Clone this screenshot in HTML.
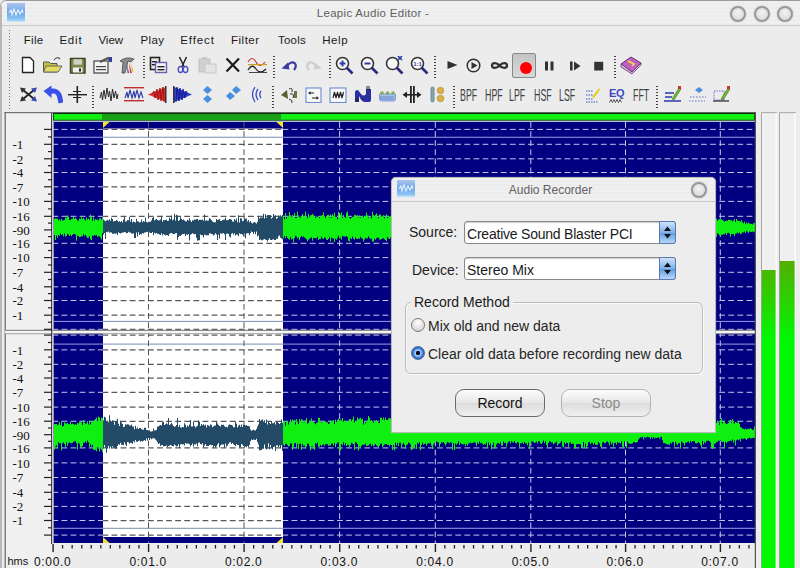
<!DOCTYPE html>
<html><head><meta charset="utf-8"><style>
html,body{margin:0;padding:0;}
body{width:800px;height:568px;overflow:hidden;position:relative;background:#ececec;font-family:"Liberation Sans",sans-serif;}
.abs{position:absolute;}
</style></head><body>
<div class="abs" style="left:0;top:0;width:800px;height:26px;background:repeating-linear-gradient(#f0f0f0 0,#f0f0f0 2px,#ededed 2px,#ededed 4px);border-top:1px solid #9a9a9a;border-left:1px solid #a8a8a8;border-top-left-radius:6px;box-sizing:border-box;border-bottom:1px solid #cbcbcb"></div>
<div class="abs" style="left:0;top:6px;width:1.5px;height:562px;background:#b8b8b8"></div>
<svg style="position:absolute;left:0;top:0" width="800" height="568" viewBox="0 0 800 568"><rect x="5" y="112" width="48" height="456" fill="#f0f0f0"/><rect x="4.5" y="112" width="1.5" height="456" fill="#808080"/><rect x="4.5" y="112" width="751" height="1.2" fill="#707070"/><rect x="53" y="112.8" width="702" height="8" fill="#0a300a"/><rect x="53.8" y="114" width="700.4" height="5.8" fill="#12ee12"/><rect x="102" y="114" width="179" height="5.8" fill="#179f17"/><rect x="53" y="120.8" width="702" height="1.2" fill="#a8c8c8"/><rect x="53" y="122" width="702" height="421" fill="#020080"/><rect x="53" y="122" width="1" height="421" fill="#9090b8"/><rect x="103" y="128.5" width="180" height="408.5" fill="#ffffff"/><line x1="53" y1="129.40" x2="103" y2="129.40" stroke="#c4c4ec" stroke-width="1" stroke-dasharray="5.8 3.3" stroke-dashoffset="-8.5"/><line x1="103" y1="129.40" x2="283" y2="129.40" stroke="#585858" stroke-width="1.25" stroke-dasharray="5.8 3.3" stroke-dashoffset="-8.5"/><line x1="283" y1="129.40" x2="755" y2="129.40" stroke="#c4c4ec" stroke-width="1" stroke-dasharray="5.8 3.3" stroke-dashoffset="-8.5"/><line x1="53" y1="144.30" x2="103" y2="144.30" stroke="#c4c4ec" stroke-width="1" stroke-dasharray="5.8 3.3" stroke-dashoffset="-8.5"/><line x1="103" y1="144.30" x2="283" y2="144.30" stroke="#585858" stroke-width="1.25" stroke-dasharray="5.8 3.3" stroke-dashoffset="-8.5"/><line x1="283" y1="144.30" x2="755" y2="144.30" stroke="#c4c4ec" stroke-width="1" stroke-dasharray="5.8 3.3" stroke-dashoffset="-8.5"/><line x1="53" y1="158.80" x2="103" y2="158.80" stroke="#c4c4ec" stroke-width="1" stroke-dasharray="5.8 3.3" stroke-dashoffset="-8.5"/><line x1="103" y1="158.80" x2="283" y2="158.80" stroke="#585858" stroke-width="1.25" stroke-dasharray="5.8 3.3" stroke-dashoffset="-8.5"/><line x1="283" y1="158.80" x2="755" y2="158.80" stroke="#c4c4ec" stroke-width="1" stroke-dasharray="5.8 3.3" stroke-dashoffset="-8.5"/><line x1="53" y1="172.50" x2="103" y2="172.50" stroke="#c4c4ec" stroke-width="1" stroke-dasharray="5.8 3.3" stroke-dashoffset="-8.5"/><line x1="103" y1="172.50" x2="283" y2="172.50" stroke="#585858" stroke-width="1.25" stroke-dasharray="5.8 3.3" stroke-dashoffset="-8.5"/><line x1="283" y1="172.50" x2="755" y2="172.50" stroke="#c4c4ec" stroke-width="1" stroke-dasharray="5.8 3.3" stroke-dashoffset="-8.5"/><line x1="53" y1="186.80" x2="103" y2="186.80" stroke="#c4c4ec" stroke-width="1" stroke-dasharray="5.8 3.3" stroke-dashoffset="-8.5"/><line x1="103" y1="186.80" x2="283" y2="186.80" stroke="#585858" stroke-width="1.25" stroke-dasharray="5.8 3.3" stroke-dashoffset="-8.5"/><line x1="283" y1="186.80" x2="755" y2="186.80" stroke="#c4c4ec" stroke-width="1" stroke-dasharray="5.8 3.3" stroke-dashoffset="-8.5"/><line x1="53" y1="201.40" x2="103" y2="201.40" stroke="#c4c4ec" stroke-width="1" stroke-dasharray="5.8 3.3" stroke-dashoffset="-8.5"/><line x1="103" y1="201.40" x2="283" y2="201.40" stroke="#585858" stroke-width="1.25" stroke-dasharray="5.8 3.3" stroke-dashoffset="-8.5"/><line x1="283" y1="201.40" x2="755" y2="201.40" stroke="#c4c4ec" stroke-width="1" stroke-dasharray="5.8 3.3" stroke-dashoffset="-8.5"/><line x1="53" y1="216.30" x2="103" y2="216.30" stroke="#c4c4ec" stroke-width="1" stroke-dasharray="5.8 3.3" stroke-dashoffset="-8.5"/><line x1="103" y1="216.30" x2="283" y2="216.30" stroke="#585858" stroke-width="1.25" stroke-dasharray="5.8 3.3" stroke-dashoffset="-8.5"/><line x1="283" y1="216.30" x2="755" y2="216.30" stroke="#c4c4ec" stroke-width="1" stroke-dasharray="5.8 3.3" stroke-dashoffset="-8.5"/><line x1="53" y1="229.90" x2="103" y2="229.90" stroke="#c4c4ec" stroke-width="1" stroke-dasharray="5.8 3.3" stroke-dashoffset="-8.5"/><line x1="103" y1="229.90" x2="283" y2="229.90" stroke="#585858" stroke-width="1.25" stroke-dasharray="5.8 3.3" stroke-dashoffset="-8.5"/><line x1="283" y1="229.90" x2="755" y2="229.90" stroke="#c4c4ec" stroke-width="1" stroke-dasharray="5.8 3.3" stroke-dashoffset="-8.5"/><line x1="53" y1="243.30" x2="103" y2="243.30" stroke="#c4c4ec" stroke-width="1" stroke-dasharray="5.8 3.3" stroke-dashoffset="-8.5"/><line x1="103" y1="243.30" x2="283" y2="243.30" stroke="#585858" stroke-width="1.25" stroke-dasharray="5.8 3.3" stroke-dashoffset="-8.5"/><line x1="283" y1="243.30" x2="755" y2="243.30" stroke="#c4c4ec" stroke-width="1" stroke-dasharray="5.8 3.3" stroke-dashoffset="-8.5"/><line x1="53" y1="257.60" x2="103" y2="257.60" stroke="#c4c4ec" stroke-width="1" stroke-dasharray="5.8 3.3" stroke-dashoffset="-8.5"/><line x1="103" y1="257.60" x2="283" y2="257.60" stroke="#585858" stroke-width="1.25" stroke-dasharray="5.8 3.3" stroke-dashoffset="-8.5"/><line x1="283" y1="257.60" x2="755" y2="257.60" stroke="#c4c4ec" stroke-width="1" stroke-dasharray="5.8 3.3" stroke-dashoffset="-8.5"/><line x1="53" y1="272.30" x2="103" y2="272.30" stroke="#c4c4ec" stroke-width="1" stroke-dasharray="5.8 3.3" stroke-dashoffset="-8.5"/><line x1="103" y1="272.30" x2="283" y2="272.30" stroke="#585858" stroke-width="1.25" stroke-dasharray="5.8 3.3" stroke-dashoffset="-8.5"/><line x1="283" y1="272.30" x2="755" y2="272.30" stroke="#c4c4ec" stroke-width="1" stroke-dasharray="5.8 3.3" stroke-dashoffset="-8.5"/><line x1="53" y1="286.80" x2="103" y2="286.80" stroke="#c4c4ec" stroke-width="1" stroke-dasharray="5.8 3.3" stroke-dashoffset="-8.5"/><line x1="103" y1="286.80" x2="283" y2="286.80" stroke="#585858" stroke-width="1.25" stroke-dasharray="5.8 3.3" stroke-dashoffset="-8.5"/><line x1="283" y1="286.80" x2="755" y2="286.80" stroke="#c4c4ec" stroke-width="1" stroke-dasharray="5.8 3.3" stroke-dashoffset="-8.5"/><line x1="53" y1="300.50" x2="103" y2="300.50" stroke="#c4c4ec" stroke-width="1" stroke-dasharray="5.8 3.3" stroke-dashoffset="-8.5"/><line x1="103" y1="300.50" x2="283" y2="300.50" stroke="#585858" stroke-width="1.25" stroke-dasharray="5.8 3.3" stroke-dashoffset="-8.5"/><line x1="283" y1="300.50" x2="755" y2="300.50" stroke="#c4c4ec" stroke-width="1" stroke-dasharray="5.8 3.3" stroke-dashoffset="-8.5"/><line x1="53" y1="315.20" x2="103" y2="315.20" stroke="#c4c4ec" stroke-width="1" stroke-dasharray="5.8 3.3" stroke-dashoffset="-8.5"/><line x1="103" y1="315.20" x2="283" y2="315.20" stroke="#585858" stroke-width="1.25" stroke-dasharray="5.8 3.3" stroke-dashoffset="-8.5"/><line x1="283" y1="315.20" x2="755" y2="315.20" stroke="#c4c4ec" stroke-width="1" stroke-dasharray="5.8 3.3" stroke-dashoffset="-8.5"/><line x1="53" y1="329.30" x2="103" y2="329.30" stroke="#c4c4ec" stroke-width="1" stroke-dasharray="5.8 3.3" stroke-dashoffset="-8.5"/><line x1="103" y1="329.30" x2="283" y2="329.30" stroke="#585858" stroke-width="1.25" stroke-dasharray="5.8 3.3" stroke-dashoffset="-8.5"/><line x1="283" y1="329.30" x2="755" y2="329.30" stroke="#c4c4ec" stroke-width="1" stroke-dasharray="5.8 3.3" stroke-dashoffset="-8.5"/><line x1="53" y1="335.10" x2="103" y2="335.10" stroke="#c4c4ec" stroke-width="1" stroke-dasharray="5.8 3.3" stroke-dashoffset="-8.5"/><line x1="103" y1="335.10" x2="283" y2="335.10" stroke="#585858" stroke-width="1.25" stroke-dasharray="5.8 3.3" stroke-dashoffset="-8.5"/><line x1="283" y1="335.10" x2="755" y2="335.10" stroke="#c4c4ec" stroke-width="1" stroke-dasharray="5.8 3.3" stroke-dashoffset="-8.5"/><line x1="53" y1="349.85" x2="103" y2="349.85" stroke="#c4c4ec" stroke-width="1" stroke-dasharray="5.8 3.3" stroke-dashoffset="-8.5"/><line x1="103" y1="349.85" x2="283" y2="349.85" stroke="#585858" stroke-width="1.25" stroke-dasharray="5.8 3.3" stroke-dashoffset="-8.5"/><line x1="283" y1="349.85" x2="755" y2="349.85" stroke="#c4c4ec" stroke-width="1" stroke-dasharray="5.8 3.3" stroke-dashoffset="-8.5"/><line x1="53" y1="364.30" x2="103" y2="364.30" stroke="#c4c4ec" stroke-width="1" stroke-dasharray="5.8 3.3" stroke-dashoffset="-8.5"/><line x1="103" y1="364.30" x2="283" y2="364.30" stroke="#585858" stroke-width="1.25" stroke-dasharray="5.8 3.3" stroke-dashoffset="-8.5"/><line x1="283" y1="364.30" x2="755" y2="364.30" stroke="#c4c4ec" stroke-width="1" stroke-dasharray="5.8 3.3" stroke-dashoffset="-8.5"/><line x1="53" y1="378.00" x2="103" y2="378.00" stroke="#c4c4ec" stroke-width="1" stroke-dasharray="5.8 3.3" stroke-dashoffset="-8.5"/><line x1="103" y1="378.00" x2="283" y2="378.00" stroke="#585858" stroke-width="1.25" stroke-dasharray="5.8 3.3" stroke-dashoffset="-8.5"/><line x1="283" y1="378.00" x2="755" y2="378.00" stroke="#c4c4ec" stroke-width="1" stroke-dasharray="5.8 3.3" stroke-dashoffset="-8.5"/><line x1="53" y1="392.30" x2="103" y2="392.30" stroke="#c4c4ec" stroke-width="1" stroke-dasharray="5.8 3.3" stroke-dashoffset="-8.5"/><line x1="103" y1="392.30" x2="283" y2="392.30" stroke="#585858" stroke-width="1.25" stroke-dasharray="5.8 3.3" stroke-dashoffset="-8.5"/><line x1="283" y1="392.30" x2="755" y2="392.30" stroke="#c4c4ec" stroke-width="1" stroke-dasharray="5.8 3.3" stroke-dashoffset="-8.5"/><line x1="53" y1="407.10" x2="103" y2="407.10" stroke="#c4c4ec" stroke-width="1" stroke-dasharray="5.8 3.3" stroke-dashoffset="-8.5"/><line x1="103" y1="407.10" x2="283" y2="407.10" stroke="#585858" stroke-width="1.25" stroke-dasharray="5.8 3.3" stroke-dashoffset="-8.5"/><line x1="283" y1="407.10" x2="755" y2="407.10" stroke="#c4c4ec" stroke-width="1" stroke-dasharray="5.8 3.3" stroke-dashoffset="-8.5"/><line x1="53" y1="421.25" x2="103" y2="421.25" stroke="#c4c4ec" stroke-width="1" stroke-dasharray="5.8 3.3" stroke-dashoffset="-8.5"/><line x1="103" y1="421.25" x2="283" y2="421.25" stroke="#585858" stroke-width="1.25" stroke-dasharray="5.8 3.3" stroke-dashoffset="-8.5"/><line x1="283" y1="421.25" x2="755" y2="421.25" stroke="#c4c4ec" stroke-width="1" stroke-dasharray="5.8 3.3" stroke-dashoffset="-8.5"/><line x1="53" y1="434.70" x2="103" y2="434.70" stroke="#c4c4ec" stroke-width="1" stroke-dasharray="5.8 3.3" stroke-dashoffset="-8.5"/><line x1="103" y1="434.70" x2="283" y2="434.70" stroke="#585858" stroke-width="1.25" stroke-dasharray="5.8 3.3" stroke-dashoffset="-8.5"/><line x1="283" y1="434.70" x2="755" y2="434.70" stroke="#c4c4ec" stroke-width="1" stroke-dasharray="5.8 3.3" stroke-dashoffset="-8.5"/><line x1="53" y1="447.90" x2="103" y2="447.90" stroke="#c4c4ec" stroke-width="1" stroke-dasharray="5.8 3.3" stroke-dashoffset="-8.5"/><line x1="103" y1="447.90" x2="283" y2="447.90" stroke="#585858" stroke-width="1.25" stroke-dasharray="5.8 3.3" stroke-dashoffset="-8.5"/><line x1="283" y1="447.90" x2="755" y2="447.90" stroke="#c4c4ec" stroke-width="1" stroke-dasharray="5.8 3.3" stroke-dashoffset="-8.5"/><line x1="53" y1="462.90" x2="103" y2="462.90" stroke="#c4c4ec" stroke-width="1" stroke-dasharray="5.8 3.3" stroke-dashoffset="-8.5"/><line x1="103" y1="462.90" x2="283" y2="462.90" stroke="#585858" stroke-width="1.25" stroke-dasharray="5.8 3.3" stroke-dashoffset="-8.5"/><line x1="283" y1="462.90" x2="755" y2="462.90" stroke="#c4c4ec" stroke-width="1" stroke-dasharray="5.8 3.3" stroke-dashoffset="-8.5"/><line x1="53" y1="477.50" x2="103" y2="477.50" stroke="#c4c4ec" stroke-width="1" stroke-dasharray="5.8 3.3" stroke-dashoffset="-8.5"/><line x1="103" y1="477.50" x2="283" y2="477.50" stroke="#585858" stroke-width="1.25" stroke-dasharray="5.8 3.3" stroke-dashoffset="-8.5"/><line x1="283" y1="477.50" x2="755" y2="477.50" stroke="#c4c4ec" stroke-width="1" stroke-dasharray="5.8 3.3" stroke-dashoffset="-8.5"/><line x1="53" y1="492.30" x2="103" y2="492.30" stroke="#c4c4ec" stroke-width="1" stroke-dasharray="5.8 3.3" stroke-dashoffset="-8.5"/><line x1="103" y1="492.30" x2="283" y2="492.30" stroke="#585858" stroke-width="1.25" stroke-dasharray="5.8 3.3" stroke-dashoffset="-8.5"/><line x1="283" y1="492.30" x2="755" y2="492.30" stroke="#c4c4ec" stroke-width="1" stroke-dasharray="5.8 3.3" stroke-dashoffset="-8.5"/><line x1="53" y1="506.40" x2="103" y2="506.40" stroke="#c4c4ec" stroke-width="1" stroke-dasharray="5.8 3.3" stroke-dashoffset="-8.5"/><line x1="103" y1="506.40" x2="283" y2="506.40" stroke="#585858" stroke-width="1.25" stroke-dasharray="5.8 3.3" stroke-dashoffset="-8.5"/><line x1="283" y1="506.40" x2="755" y2="506.40" stroke="#c4c4ec" stroke-width="1" stroke-dasharray="5.8 3.3" stroke-dashoffset="-8.5"/><line x1="53" y1="520.50" x2="103" y2="520.50" stroke="#c4c4ec" stroke-width="1" stroke-dasharray="5.8 3.3" stroke-dashoffset="-8.5"/><line x1="103" y1="520.50" x2="283" y2="520.50" stroke="#585858" stroke-width="1.25" stroke-dasharray="5.8 3.3" stroke-dashoffset="-8.5"/><line x1="283" y1="520.50" x2="755" y2="520.50" stroke="#c4c4ec" stroke-width="1" stroke-dasharray="5.8 3.3" stroke-dashoffset="-8.5"/><line x1="53" y1="535.10" x2="103" y2="535.10" stroke="#c4c4ec" stroke-width="1" stroke-dasharray="5.8 3.3" stroke-dashoffset="-8.5"/><line x1="103" y1="535.10" x2="283" y2="535.10" stroke="#585858" stroke-width="1.25" stroke-dasharray="5.8 3.3" stroke-dashoffset="-8.5"/><line x1="283" y1="535.10" x2="755" y2="535.10" stroke="#c4c4ec" stroke-width="1" stroke-dasharray="5.8 3.3" stroke-dashoffset="-8.5"/><line x1="53" y1="137.25" x2="103" y2="137.25" stroke="#9c9ce4" stroke-width="1"/><line x1="103" y1="137.25" x2="283" y2="137.25" stroke="#7890b0" stroke-width="1"/><line x1="283" y1="137.25" x2="755" y2="137.25" stroke="#9c9ce4" stroke-width="1"/><line x1="53" y1="321.40" x2="103" y2="321.40" stroke="#9c9ce4" stroke-width="1"/><line x1="103" y1="321.40" x2="283" y2="321.40" stroke="#7890b0" stroke-width="1"/><line x1="283" y1="321.40" x2="755" y2="321.40" stroke="#9c9ce4" stroke-width="1"/><line x1="53" y1="344.10" x2="103" y2="344.10" stroke="#9c9ce4" stroke-width="1"/><line x1="103" y1="344.10" x2="283" y2="344.10" stroke="#7890b0" stroke-width="1"/><line x1="283" y1="344.10" x2="755" y2="344.10" stroke="#9c9ce4" stroke-width="1"/><line x1="53" y1="528.30" x2="103" y2="528.30" stroke="#9c9ce4" stroke-width="1"/><line x1="103" y1="528.30" x2="283" y2="528.30" stroke="#7890b0" stroke-width="1"/><line x1="283" y1="528.30" x2="755" y2="528.30" stroke="#9c9ce4" stroke-width="1"/><line x1="148.5" y1="122" x2="148.5" y2="543" stroke="#555555" stroke-width="1" stroke-dasharray="5.8 3.3"/><line x1="244.0" y1="122" x2="244.0" y2="543" stroke="#555555" stroke-width="1" stroke-dasharray="5.8 3.3"/><line x1="339.6" y1="122" x2="339.6" y2="543" stroke="#c4c4ec" stroke-width="1" stroke-dasharray="5.8 3.3"/><line x1="435.3" y1="122" x2="435.3" y2="543" stroke="#c4c4ec" stroke-width="1" stroke-dasharray="5.8 3.3"/><line x1="530.8" y1="122" x2="530.8" y2="543" stroke="#c4c4ec" stroke-width="1" stroke-dasharray="5.8 3.3"/><line x1="625.5" y1="122" x2="625.5" y2="543" stroke="#c4c4ec" stroke-width="1" stroke-dasharray="5.8 3.3"/><line x1="720.3" y1="122" x2="720.3" y2="543" stroke="#c4c4ec" stroke-width="1" stroke-dasharray="5.8 3.3"/><path d="M54.0,219.0 L55.0,219.0 L55.0,218.2 L56.0,218.2 L56.0,218.8 L57.0,218.8 L57.0,218.6 L58.0,218.6 L58.0,220.3 L59.0,220.3 L59.0,219.2 L60.0,219.2 L60.0,220.9 L61.0,220.9 L61.0,218.7 L62.0,218.7 L62.0,220.2 L63.0,220.2 L63.0,220.6 L64.0,220.6 L64.0,220.0 L65.0,220.0 L65.0,217.6 L66.0,217.6 L66.0,217.7 L67.0,217.7 L67.0,215.2 L68.0,215.2 L68.0,216.4 L69.0,216.4 L69.0,220.1 L70.0,220.1 L70.0,220.1 L71.0,220.1 L71.0,219.1 L72.0,219.1 L72.0,218.8 L73.0,218.8 L73.0,216.7 L74.0,216.7 L74.0,218.4 L75.0,218.4 L75.0,217.9 L76.0,217.9 L76.0,219.1 L77.0,219.1 L77.0,220.6 L78.0,220.6 L78.0,220.8 L79.0,220.8 L79.0,218.7 L80.0,218.7 L80.0,219.3 L81.0,219.3 L81.0,216.1 L82.0,216.1 L82.0,219.1 L83.0,219.1 L83.0,217.9 L84.0,217.9 L84.0,219.3 L85.0,219.3 L85.0,220.4 L86.0,220.4 L86.0,217.5 L87.0,217.5 L87.0,219.6 L88.0,219.6 L88.0,218.4 L89.0,218.4 L89.0,219.7 L90.0,219.7 L90.0,214.5 L91.0,214.5 L91.0,217.3 L92.0,217.3 L92.0,220.9 L93.0,220.9 L93.0,217.2 L94.0,217.2 L94.0,220.5 L95.0,220.5 L95.0,219.1 L96.0,219.1 L96.0,219.8 L97.0,219.8 L97.0,219.5 L98.0,219.5 L98.0,220.5 L99.0,220.5 L99.0,218.5 L100.0,218.5 L100.0,218.2 L101.0,218.2 L101.0,219.7 L102.0,219.7 L102.0,217.8 L103.0,217.8 L103.0,233.2 L102.0,233.2 L102.0,239.6 L101.0,239.6 L101.0,237.6 L100.0,237.6 L100.0,236.4 L99.0,236.4 L99.0,236.3 L98.0,236.3 L98.0,236.7 L97.0,236.7 L97.0,235.1 L96.0,235.1 L96.0,235.4 L95.0,235.4 L95.0,235.1 L94.0,235.1 L94.0,235.9 L93.0,235.9 L93.0,235.4 L92.0,235.4 L92.0,240.2 L91.0,240.2 L91.0,239.3 L90.0,239.3 L90.0,236.1 L89.0,236.1 L89.0,237.7 L88.0,237.7 L88.0,237.9 L87.0,237.9 L87.0,236.4 L86.0,236.4 L86.0,234.7 L85.0,234.7 L85.0,235.7 L84.0,235.7 L84.0,234.1 L83.0,234.1 L83.0,236.6 L82.0,236.6 L82.0,236.1 L81.0,236.1 L81.0,237.1 L80.0,237.1 L80.0,237.2 L79.0,237.2 L79.0,236.1 L78.0,236.1 L78.0,235.8 L77.0,235.8 L77.0,240.8 L76.0,240.8 L76.0,234.5 L75.0,234.5 L75.0,234.0 L74.0,234.0 L74.0,233.9 L73.0,233.9 L73.0,234.8 L72.0,234.8 L72.0,236.3 L71.0,236.3 L71.0,234.7 L70.0,234.7 L70.0,236.0 L69.0,236.0 L69.0,234.4 L68.0,234.4 L68.0,234.0 L67.0,234.0 L67.0,236.1 L66.0,236.1 L66.0,236.6 L65.0,236.6 L65.0,233.5 L64.0,233.5 L64.0,236.5 L63.0,236.5 L63.0,234.2 L62.0,234.2 L62.0,235.1 L61.0,235.1 L61.0,233.4 L60.0,233.4 L60.0,235.7 L59.0,235.7 L59.0,235.1 L58.0,235.1 L58.0,237.7 L57.0,237.7 L57.0,235.6 L56.0,235.6 L56.0,240.1 L55.0,240.1 L55.0,235.1 L54.0,235.1Z" fill="#10f010"/><path d="M103.0,219.6 L104.0,219.6 L104.0,220.6 L105.0,220.6 L105.0,221.3 L106.0,221.3 L106.0,220.5 L107.0,220.5 L107.0,219.7 L108.0,219.7 L108.0,220.4 L109.0,220.4 L109.0,219.3 L110.0,219.3 L110.0,220.7 L111.0,220.7 L111.0,217.8 L112.0,217.8 L112.0,218.9 L113.0,218.9 L113.0,221.5 L114.0,221.5 L114.0,221.1 L115.0,221.1 L115.0,220.9 L116.0,220.9 L116.0,220.1 L117.0,220.1 L117.0,220.8 L118.0,220.8 L118.0,221.8 L119.0,221.8 L119.0,221.3 L120.0,221.3 L120.0,222.0 L121.0,222.0 L121.0,221.1 L122.0,221.1 L122.0,222.4 L123.0,222.4 L123.0,219.5 L124.0,219.5 L124.0,217.1 L125.0,217.1 L125.0,221.4 L126.0,221.4 L126.0,221.6 L127.0,221.6 L127.0,220.1 L128.0,220.1 L128.0,220.3 L129.0,220.3 L129.0,217.0 L130.0,217.0 L130.0,221.6 L131.0,221.6 L131.0,218.9 L132.0,218.9 L132.0,222.6 L133.0,222.6 L133.0,221.4 L134.0,221.4 L134.0,222.1 L135.0,222.1 L135.0,222.4 L136.0,222.4 L136.0,218.8 L137.0,218.8 L137.0,221.3 L138.0,221.3 L138.0,221.6 L139.0,221.6 L139.0,222.5 L140.0,222.5 L140.0,221.9 L141.0,221.9 L141.0,219.6 L142.0,219.6 L142.0,222.3 L143.0,222.3 L143.0,221.0 L144.0,221.0 L144.0,221.8 L145.0,221.8 L145.0,217.5 L146.0,217.5 L146.0,222.1 L147.0,222.1 L147.0,222.5 L148.0,222.5 L148.0,221.7 L149.0,221.7 L149.0,221.9 L150.0,221.9 L150.0,221.8 L151.0,221.8 L151.0,220.5 L152.0,220.5 L152.0,218.1 L153.0,218.1 L153.0,217.0 L154.0,217.0 L154.0,220.5 L155.0,220.5 L155.0,219.6 L156.0,219.6 L156.0,218.9 L157.0,218.9 L157.0,219.9 L158.0,219.9 L158.0,220.4 L159.0,220.4 L159.0,220.3 L160.0,220.3 L160.0,219.5 L161.0,219.5 L161.0,215.7 L162.0,215.7 L162.0,221.7 L163.0,221.7 L163.0,219.9 L164.0,219.9 L164.0,220.2 L165.0,220.2 L165.0,220.0 L166.0,220.0 L166.0,219.6 L167.0,219.6 L167.0,221.0 L168.0,221.0 L168.0,220.8 L169.0,220.8 L169.0,217.7 L170.0,217.7 L170.0,219.1 L171.0,219.1 L171.0,215.6 L172.0,215.6 L172.0,220.3 L173.0,220.3 L173.0,219.5 L174.0,219.5 L174.0,213.8 L175.0,213.8 L175.0,220.6 L176.0,220.6 L176.0,214.8 L177.0,214.8 L177.0,215.6 L178.0,215.6 L178.0,220.9 L179.0,220.9 L179.0,219.9 L180.0,219.9 L180.0,217.3 L181.0,217.3 L181.0,218.8 L182.0,218.8 L182.0,220.0 L183.0,220.0 L183.0,219.5 L184.0,219.5 L184.0,220.5 L185.0,220.5 L185.0,221.2 L186.0,221.2 L186.0,221.4 L187.0,221.4 L187.0,219.7 L188.0,219.7 L188.0,220.4 L189.0,220.4 L189.0,218.2 L190.0,218.2 L190.0,220.4 L191.0,220.4 L191.0,221.9 L192.0,221.9 L192.0,220.2 L193.0,220.2 L193.0,220.6 L194.0,220.6 L194.0,219.6 L195.0,219.6 L195.0,219.8 L196.0,219.8 L196.0,218.9 L197.0,218.9 L197.0,218.9 L198.0,218.9 L198.0,220.4 L199.0,220.4 L199.0,219.7 L200.0,219.7 L200.0,219.7 L201.0,219.7 L201.0,219.9 L202.0,219.9 L202.0,219.5 L203.0,219.5 L203.0,220.8 L204.0,220.8 L204.0,214.4 L205.0,214.4 L205.0,220.8 L206.0,220.8 L206.0,220.2 L207.0,220.2 L207.0,220.7 L208.0,220.7 L208.0,220.5 L209.0,220.5 L209.0,218.1 L210.0,218.1 L210.0,219.0 L211.0,219.0 L211.0,220.2 L212.0,220.2 L212.0,221.6 L213.0,221.6 L213.0,222.2 L214.0,222.2 L214.0,222.3 L215.0,222.3 L215.0,222.3 L216.0,222.3 L216.0,219.1 L217.0,219.1 L217.0,219.9 L218.0,219.9 L218.0,219.8 L219.0,219.8 L219.0,219.0 L220.0,219.0 L220.0,220.7 L221.0,220.7 L221.0,220.9 L222.0,220.9 L222.0,220.0 L223.0,220.0 L223.0,219.8 L224.0,219.8 L224.0,219.4 L225.0,219.4 L225.0,217.6 L226.0,217.6 L226.0,220.3 L227.0,220.3 L227.0,220.3 L228.0,220.3 L228.0,220.1 L229.0,220.1 L229.0,219.1 L230.0,219.1 L230.0,219.0 L231.0,219.0 L231.0,219.7 L232.0,219.7 L232.0,221.6 L233.0,221.6 L233.0,221.8 L234.0,221.8 L234.0,219.1 L235.0,219.1 L235.0,220.4 L236.0,220.4 L236.0,218.5 L237.0,218.5 L237.0,222.2 L238.0,222.2 L238.0,215.2 L239.0,215.2 L239.0,222.4 L240.0,222.4 L240.0,218.2 L241.0,218.2 L241.0,218.6 L242.0,218.6 L242.0,221.3 L243.0,221.3 L243.0,220.8 L244.0,220.8 L244.0,218.2 L245.0,218.2 L245.0,218.8 L246.0,218.8 L246.0,218.7 L247.0,218.7 L247.0,221.4 L248.0,221.4 L248.0,219.9 L249.0,219.9 L249.0,222.2 L250.0,222.2 L250.0,221.0 L251.0,221.0 L251.0,222.7 L252.0,222.7 L252.0,223.6 L253.0,223.6 L253.0,222.5 L254.0,222.5 L254.0,222.0 L255.0,222.0 L255.0,222.8 L256.0,222.8 L256.0,223.4 L257.0,223.4 L257.0,221.8 L258.0,221.8 L258.0,216.7 L259.0,216.7 L259.0,218.5 L260.0,218.5 L260.0,217.4 L261.0,217.4 L261.0,217.4 L262.0,217.4 L262.0,217.5 L263.0,217.5 L263.0,213.8 L264.0,213.8 L264.0,218.4 L265.0,218.4 L265.0,214.2 L266.0,214.2 L266.0,217.7 L267.0,217.7 L267.0,215.3 L268.0,215.3 L268.0,215.0 L269.0,215.0 L269.0,214.9 L270.0,214.9 L270.0,215.3 L271.0,215.3 L271.0,218.4 L272.0,218.4 L272.0,217.6 L273.0,217.6 L273.0,214.0 L274.0,214.0 L274.0,215.7 L275.0,215.7 L275.0,215.2 L276.0,215.2 L276.0,218.7 L277.0,218.7 L277.0,218.0 L278.0,218.0 L278.0,215.6 L279.0,215.6 L279.0,216.4 L280.0,216.4 L280.0,215.3 L281.0,215.3 L281.0,216.5 L282.0,216.5 L282.0,214.9 L283.0,214.9 L283.0,239.2 L282.0,239.2 L282.0,238.6 L281.0,238.6 L281.0,237.8 L280.0,237.8 L280.0,235.5 L279.0,235.5 L279.0,236.3 L278.0,236.3 L278.0,238.9 L277.0,238.9 L277.0,238.4 L276.0,238.4 L276.0,240.1 L275.0,240.1 L275.0,240.1 L274.0,240.1 L274.0,239.3 L273.0,239.3 L273.0,239.4 L272.0,239.4 L272.0,239.9 L271.0,239.9 L271.0,240.1 L270.0,240.1 L270.0,238.2 L269.0,238.2 L269.0,239.8 L268.0,239.8 L268.0,241.6 L267.0,241.6 L267.0,240.0 L266.0,240.0 L266.0,239.6 L265.0,239.6 L265.0,238.9 L264.0,238.9 L264.0,239.6 L263.0,239.6 L263.0,240.3 L262.0,240.3 L262.0,240.2 L261.0,240.2 L261.0,239.5 L260.0,239.5 L260.0,240.1 L259.0,240.1 L259.0,235.5 L258.0,235.5 L258.0,236.4 L257.0,236.4 L257.0,231.5 L256.0,231.5 L256.0,234.2 L255.0,234.2 L255.0,231.7 L254.0,231.7 L254.0,234.1 L253.0,234.1 L253.0,232.0 L252.0,232.0 L252.0,231.5 L251.0,231.5 L251.0,232.9 L250.0,232.9 L250.0,235.3 L249.0,235.3 L249.0,233.2 L248.0,233.2 L248.0,233.2 L247.0,233.2 L247.0,233.5 L246.0,233.5 L246.0,238.2 L245.0,238.2 L245.0,233.2 L244.0,233.2 L244.0,236.0 L243.0,236.0 L243.0,234.4 L242.0,234.4 L242.0,234.0 L241.0,234.0 L241.0,234.0 L240.0,234.0 L240.0,233.2 L239.0,233.2 L239.0,236.3 L238.0,236.3 L238.0,234.4 L237.0,234.4 L237.0,234.4 L236.0,234.4 L236.0,235.5 L235.0,235.5 L235.0,233.2 L234.0,233.2 L234.0,234.5 L233.0,234.5 L233.0,233.1 L232.0,233.1 L232.0,233.7 L231.0,233.7 L231.0,237.6 L230.0,237.6 L230.0,236.6 L229.0,236.6 L229.0,234.1 L228.0,234.1 L228.0,233.4 L227.0,233.4 L227.0,233.8 L226.0,233.8 L226.0,239.9 L225.0,239.9 L225.0,234.2 L224.0,234.2 L224.0,233.0 L223.0,233.0 L223.0,233.5 L222.0,233.5 L222.0,233.8 L221.0,233.8 L221.0,233.2 L220.0,233.2 L220.0,238.4 L219.0,238.4 L219.0,234.8 L218.0,234.8 L218.0,239.9 L217.0,239.9 L217.0,234.6 L216.0,234.6 L216.0,233.2 L215.0,233.2 L215.0,234.8 L214.0,234.8 L214.0,235.5 L213.0,235.5 L213.0,234.3 L212.0,234.3 L212.0,234.1 L211.0,234.1 L211.0,233.6 L210.0,233.6 L210.0,233.2 L209.0,233.2 L209.0,235.2 L208.0,235.2 L208.0,235.2 L207.0,235.2 L207.0,235.6 L206.0,235.6 L206.0,234.7 L205.0,234.7 L205.0,234.8 L204.0,234.8 L204.0,237.6 L203.0,237.6 L203.0,235.2 L202.0,235.2 L202.0,235.2 L201.0,235.2 L201.0,234.6 L200.0,234.6 L200.0,240.2 L199.0,240.2 L199.0,240.3 L198.0,240.3 L198.0,240.8 L197.0,240.8 L197.0,237.7 L196.0,237.7 L196.0,234.1 L195.0,234.1 L195.0,234.2 L194.0,234.2 L194.0,233.8 L193.0,233.8 L193.0,233.2 L192.0,233.2 L192.0,233.9 L191.0,233.9 L191.0,234.7 L190.0,234.7 L190.0,240.5 L189.0,240.5 L189.0,234.1 L188.0,234.1 L188.0,235.0 L187.0,235.0 L187.0,234.2 L186.0,234.2 L186.0,236.1 L185.0,236.1 L185.0,233.8 L184.0,233.8 L184.0,233.9 L183.0,233.9 L183.0,234.0 L182.0,234.0 L182.0,234.9 L181.0,234.9 L181.0,236.0 L180.0,236.0 L180.0,235.7 L179.0,235.7 L179.0,237.1 L178.0,237.1 L178.0,239.7 L177.0,239.7 L177.0,232.9 L176.0,232.9 L176.0,233.2 L175.0,233.2 L175.0,234.0 L174.0,234.0 L174.0,234.1 L173.0,234.1 L173.0,233.6 L172.0,233.6 L172.0,233.1 L171.0,233.1 L171.0,233.2 L170.0,233.2 L170.0,233.7 L169.0,233.7 L169.0,236.0 L168.0,236.0 L168.0,235.3 L167.0,235.3 L167.0,235.1 L166.0,235.1 L166.0,235.4 L165.0,235.4 L165.0,234.8 L164.0,234.8 L164.0,234.1 L163.0,234.1 L163.0,235.5 L162.0,235.5 L162.0,233.3 L161.0,233.3 L161.0,235.1 L160.0,235.1 L160.0,234.6 L159.0,234.6 L159.0,234.1 L158.0,234.1 L158.0,233.8 L157.0,233.8 L157.0,233.1 L156.0,233.1 L156.0,233.5 L155.0,233.5 L155.0,232.8 L154.0,232.8 L154.0,235.3 L153.0,235.3 L153.0,231.9 L152.0,231.9 L152.0,233.0 L151.0,233.0 L151.0,232.9 L150.0,232.9 L150.0,232.6 L149.0,232.6 L149.0,231.8 L148.0,231.8 L148.0,231.7 L147.0,231.7 L147.0,232.0 L146.0,232.0 L146.0,232.4 L145.0,232.4 L145.0,232.6 L144.0,232.6 L144.0,233.5 L143.0,233.5 L143.0,232.9 L142.0,232.9 L142.0,234.5 L141.0,234.5 L141.0,234.0 L140.0,234.0 L140.0,235.0 L139.0,235.0 L139.0,232.2 L138.0,232.2 L138.0,236.5 L137.0,236.5 L137.0,232.4 L136.0,232.4 L136.0,238.0 L135.0,238.0 L135.0,237.9 L134.0,237.9 L134.0,233.2 L133.0,233.2 L133.0,233.7 L132.0,233.7 L132.0,233.4 L131.0,233.4 L131.0,232.5 L130.0,232.5 L130.0,232.5 L129.0,232.5 L129.0,231.8 L128.0,231.8 L128.0,233.1 L127.0,233.1 L127.0,233.3 L126.0,233.3 L126.0,232.2 L125.0,232.2 L125.0,232.0 L124.0,232.0 L124.0,232.6 L123.0,232.6 L123.0,232.5 L122.0,232.5 L122.0,232.9 L121.0,232.9 L121.0,233.6 L120.0,233.6 L120.0,233.0 L119.0,233.0 L119.0,232.2 L118.0,232.2 L118.0,234.9 L117.0,234.9 L117.0,233.3 L116.0,233.3 L116.0,233.7 L115.0,233.7 L115.0,233.5 L114.0,233.5 L114.0,233.8 L113.0,233.8 L113.0,233.8 L112.0,233.8 L112.0,232.4 L111.0,232.4 L111.0,232.2 L110.0,232.2 L110.0,232.7 L109.0,232.7 L109.0,231.6 L108.0,231.6 L108.0,232.2 L107.0,232.2 L107.0,232.1 L106.0,232.1 L106.0,239.0 L105.0,239.0 L105.0,232.9 L104.0,232.9 L104.0,234.6 L103.0,234.6Z" fill="#234a66"/><path d="M283.0,215.9 L284.0,215.9 L284.0,219.3 L285.0,219.3 L285.0,212.9 L286.0,212.9 L286.0,218.6 L287.0,218.6 L287.0,216.4 L288.0,216.4 L288.0,216.2 L289.0,216.2 L289.0,211.9 L290.0,211.9 L290.0,215.2 L291.0,215.2 L291.0,217.3 L292.0,217.3 L292.0,215.0 L293.0,215.0 L293.0,216.9 L294.0,216.9 L294.0,213.1 L295.0,213.1 L295.0,218.0 L296.0,218.0 L296.0,217.9 L297.0,217.9 L297.0,211.6 L298.0,211.6 L298.0,215.6 L299.0,215.6 L299.0,217.3 L300.0,217.3 L300.0,217.6 L301.0,217.6 L301.0,216.2 L302.0,216.2 L302.0,213.9 L303.0,213.9 L303.0,216.3 L304.0,216.3 L304.0,216.2 L305.0,216.2 L305.0,211.6 L306.0,211.6 L306.0,216.1 L307.0,216.1 L307.0,218.2 L308.0,218.2 L308.0,213.7 L309.0,213.7 L309.0,217.3 L310.0,217.3 L310.0,215.4 L311.0,215.4 L311.0,215.0 L312.0,215.0 L312.0,213.8 L313.0,213.8 L313.0,215.3 L314.0,215.3 L314.0,216.0 L315.0,216.0 L315.0,217.9 L316.0,217.9 L316.0,216.6 L317.0,216.6 L317.0,216.9 L318.0,216.9 L318.0,215.9 L319.0,215.9 L319.0,218.3 L320.0,218.3 L320.0,215.9 L321.0,215.9 L321.0,215.7 L322.0,215.7 L322.0,214.9 L323.0,214.9 L323.0,212.2 L324.0,212.2 L324.0,216.6 L325.0,216.6 L325.0,218.1 L326.0,218.1 L326.0,216.0 L327.0,216.0 L327.0,214.7 L328.0,214.7 L328.0,214.8 L329.0,214.8 L329.0,217.4 L330.0,217.4 L330.0,214.6 L331.0,214.6 L331.0,217.8 L332.0,217.8 L332.0,214.1 L333.0,214.1 L333.0,216.1 L334.0,216.1 L334.0,212.5 L335.0,212.5 L335.0,216.7 L336.0,216.7 L336.0,217.0 L337.0,217.0 L337.0,219.2 L338.0,219.2 L338.0,212.0 L339.0,212.0 L339.0,217.5 L340.0,217.5 L340.0,215.1 L341.0,215.1 L341.0,212.5 L342.0,212.5 L342.0,218.1 L343.0,218.1 L343.0,214.9 L344.0,214.9 L344.0,216.7 L345.0,216.7 L345.0,217.9 L346.0,217.9 L346.0,212.8 L347.0,212.8 L347.0,211.6 L348.0,211.6 L348.0,216.0 L349.0,216.0 L349.0,217.7 L350.0,217.7 L350.0,218.8 L351.0,218.8 L351.0,217.8 L352.0,217.8 L352.0,216.9 L353.0,216.9 L353.0,216.5 L354.0,216.5 L354.0,214.9 L355.0,214.9 L355.0,214.8 L356.0,214.8 L356.0,216.7 L357.0,216.7 L357.0,215.2 L358.0,215.2 L358.0,217.6 L359.0,217.6 L359.0,215.4 L360.0,215.4 L360.0,217.4 L361.0,217.4 L361.0,215.9 L362.0,215.9 L362.0,215.4 L363.0,215.4 L363.0,217.3 L364.0,217.3 L364.0,215.9 L365.0,215.9 L365.0,215.9 L366.0,215.9 L366.0,212.4 L367.0,212.4 L367.0,215.5 L368.0,215.5 L368.0,217.8 L369.0,217.8 L369.0,216.6 L370.0,216.6 L370.0,216.1 L371.0,216.1 L371.0,218.5 L372.0,218.5 L372.0,211.8 L373.0,211.8 L373.0,215.1 L374.0,215.1 L374.0,216.4 L375.0,216.4 L375.0,214.8 L376.0,214.8 L376.0,213.3 L377.0,213.3 L377.0,217.0 L378.0,217.0 L378.0,218.2 L379.0,218.2 L379.0,214.5 L380.0,214.5 L380.0,214.4 L381.0,214.4 L381.0,216.3 L382.0,216.3 L382.0,216.7 L383.0,216.7 L383.0,215.3 L384.0,215.3 L384.0,218.3 L385.0,218.3 L385.0,216.1 L386.0,216.1 L386.0,214.3 L387.0,214.3 L387.0,217.9 L388.0,217.9 L388.0,215.8 L389.0,215.8 L389.0,216.4 L390.0,216.4 L390.0,215.9 L391.0,215.9 L391.0,216.5 L392.0,216.5 L392.0,212.3 L393.0,212.3 L393.0,215.1 L394.0,215.1 L394.0,216.7 L395.0,216.7 L395.0,218.5 L396.0,218.5 L396.0,214.4 L397.0,214.4 L397.0,215.9 L398.0,215.9 L398.0,216.8 L399.0,216.8 L399.0,215.7 L400.0,215.7 L400.0,213.1 L401.0,213.1 L401.0,216.6 L402.0,216.6 L402.0,215.6 L403.0,215.6 L403.0,217.6 L404.0,217.6 L404.0,217.0 L405.0,217.0 L405.0,214.5 L406.0,214.5 L406.0,214.2 L407.0,214.2 L407.0,215.7 L408.0,215.7 L408.0,216.2 L409.0,216.2 L409.0,217.4 L410.0,217.4 L410.0,215.6 L411.0,215.6 L411.0,213.8 L412.0,213.8 L412.0,215.1 L413.0,215.1 L413.0,216.9 L414.0,216.9 L414.0,214.3 L415.0,214.3 L415.0,217.2 L416.0,217.2 L416.0,216.6 L417.0,216.6 L417.0,219.0 L418.0,219.0 L418.0,217.5 L419.0,217.5 L419.0,218.1 L420.0,218.1 L420.0,217.7 L421.0,217.7 L421.0,216.6 L422.0,216.6 L422.0,218.5 L423.0,218.5 L423.0,216.5 L424.0,216.5 L424.0,217.4 L425.0,217.4 L425.0,217.7 L426.0,217.7 L426.0,215.6 L427.0,215.6 L427.0,215.0 L428.0,215.0 L428.0,217.0 L429.0,217.0 L429.0,217.6 L430.0,217.6 L430.0,218.9 L431.0,218.9 L431.0,216.2 L432.0,216.2 L432.0,217.4 L433.0,217.4 L433.0,217.9 L434.0,217.9 L434.0,216.7 L435.0,216.7 L435.0,215.5 L436.0,215.5 L436.0,217.5 L437.0,217.5 L437.0,218.0 L438.0,218.0 L438.0,216.4 L439.0,216.4 L439.0,217.9 L440.0,217.9 L440.0,216.9 L441.0,216.9 L441.0,216.6 L442.0,216.6 L442.0,218.1 L443.0,218.1 L443.0,216.7 L444.0,216.7 L444.0,215.7 L445.0,215.7 L445.0,218.0 L446.0,218.0 L446.0,217.0 L447.0,217.0 L447.0,214.0 L448.0,214.0 L448.0,218.6 L449.0,218.6 L449.0,216.5 L450.0,216.5 L450.0,217.0 L451.0,217.0 L451.0,215.0 L452.0,215.0 L452.0,217.2 L453.0,217.2 L453.0,215.8 L454.0,215.8 L454.0,216.6 L455.0,216.6 L455.0,218.0 L456.0,218.0 L456.0,216.0 L457.0,216.0 L457.0,218.0 L458.0,218.0 L458.0,218.2 L459.0,218.2 L459.0,217.9 L460.0,217.9 L460.0,217.6 L461.0,217.6 L461.0,214.3 L462.0,214.3 L462.0,219.5 L463.0,219.5 L463.0,214.3 L464.0,214.3 L464.0,215.0 L465.0,215.0 L465.0,216.2 L466.0,216.2 L466.0,217.3 L467.0,217.3 L467.0,217.1 L468.0,217.1 L468.0,217.7 L469.0,217.7 L469.0,218.1 L470.0,218.1 L470.0,218.2 L471.0,218.2 L471.0,217.2 L472.0,217.2 L472.0,212.8 L473.0,212.8 L473.0,215.5 L474.0,215.5 L474.0,215.1 L475.0,215.1 L475.0,215.6 L476.0,215.6 L476.0,217.8 L477.0,217.8 L477.0,217.2 L478.0,217.2 L478.0,217.7 L479.0,217.7 L479.0,218.9 L480.0,218.9 L480.0,218.4 L481.0,218.4 L481.0,215.2 L482.0,215.2 L482.0,217.4 L483.0,217.4 L483.0,216.9 L484.0,216.9 L484.0,216.2 L485.0,216.2 L485.0,218.8 L486.0,218.8 L486.0,216.9 L487.0,216.9 L487.0,217.5 L488.0,217.5 L488.0,217.4 L489.0,217.4 L489.0,217.7 L490.0,217.7 L490.0,217.4 L491.0,217.4 L491.0,220.1 L492.0,220.1 L492.0,216.9 L493.0,216.9 L493.0,215.3 L494.0,215.3 L494.0,216.4 L495.0,216.4 L495.0,216.2 L496.0,216.2 L496.0,216.6 L497.0,216.6 L497.0,217.0 L498.0,217.0 L498.0,216.2 L499.0,216.2 L499.0,216.4 L500.0,216.4 L500.0,215.7 L501.0,215.7 L501.0,216.5 L502.0,216.5 L502.0,216.4 L503.0,216.4 L503.0,219.8 L504.0,219.8 L504.0,220.1 L505.0,220.1 L505.0,219.1 L506.0,219.1 L506.0,220.0 L507.0,220.0 L507.0,218.6 L508.0,218.6 L508.0,218.9 L509.0,218.9 L509.0,221.0 L510.0,221.0 L510.0,219.7 L511.0,219.7 L511.0,215.4 L512.0,215.4 L512.0,219.3 L513.0,219.3 L513.0,214.5 L514.0,214.5 L514.0,219.0 L515.0,219.0 L515.0,219.8 L516.0,219.8 L516.0,218.3 L517.0,218.3 L517.0,217.8 L518.0,217.8 L518.0,217.3 L519.0,217.3 L519.0,218.4 L520.0,218.4 L520.0,217.4 L521.0,217.4 L521.0,217.7 L522.0,217.7 L522.0,219.4 L523.0,219.4 L523.0,217.4 L524.0,217.4 L524.0,217.3 L525.0,217.3 L525.0,218.3 L526.0,218.3 L526.0,219.6 L527.0,219.6 L527.0,219.4 L528.0,219.4 L528.0,218.5 L529.0,218.5 L529.0,219.4 L530.0,219.4 L530.0,219.4 L531.0,219.4 L531.0,218.9 L532.0,218.9 L532.0,219.0 L533.0,219.0 L533.0,218.0 L534.0,218.0 L534.0,219.0 L535.0,219.0 L535.0,219.8 L536.0,219.8 L536.0,218.7 L537.0,218.7 L537.0,215.0 L538.0,215.0 L538.0,214.7 L539.0,214.7 L539.0,216.5 L540.0,216.5 L540.0,217.1 L541.0,217.1 L541.0,220.1 L542.0,220.1 L542.0,217.5 L543.0,217.5 L543.0,219.2 L544.0,219.2 L544.0,217.7 L545.0,217.7 L545.0,217.5 L546.0,217.5 L546.0,217.8 L547.0,217.8 L547.0,217.2 L548.0,217.2 L548.0,216.4 L549.0,216.4 L549.0,220.3 L550.0,220.3 L550.0,219.7 L551.0,219.7 L551.0,217.4 L552.0,217.4 L552.0,215.6 L553.0,215.6 L553.0,217.6 L554.0,217.6 L554.0,218.0 L555.0,218.0 L555.0,219.2 L556.0,219.2 L556.0,216.0 L557.0,216.0 L557.0,220.0 L558.0,220.0 L558.0,219.3 L559.0,219.3 L559.0,219.2 L560.0,219.2 L560.0,214.0 L561.0,214.0 L561.0,219.0 L562.0,219.0 L562.0,216.8 L563.0,216.8 L563.0,219.4 L564.0,219.4 L564.0,219.9 L565.0,219.9 L565.0,219.9 L566.0,219.9 L566.0,217.9 L567.0,217.9 L567.0,219.9 L568.0,219.9 L568.0,218.9 L569.0,218.9 L569.0,217.2 L570.0,217.2 L570.0,218.3 L571.0,218.3 L571.0,217.1 L572.0,217.1 L572.0,217.5 L573.0,217.5 L573.0,215.5 L574.0,215.5 L574.0,218.8 L575.0,218.8 L575.0,214.7 L576.0,214.7 L576.0,217.3 L577.0,217.3 L577.0,218.4 L578.0,218.4 L578.0,218.9 L579.0,218.9 L579.0,217.8 L580.0,217.8 L580.0,218.9 L581.0,218.9 L581.0,217.3 L582.0,217.3 L582.0,218.3 L583.0,218.3 L583.0,217.7 L584.0,217.7 L584.0,217.0 L585.0,217.0 L585.0,218.0 L586.0,218.0 L586.0,217.6 L587.0,217.6 L587.0,218.2 L588.0,218.2 L588.0,219.1 L589.0,219.1 L589.0,217.8 L590.0,217.8 L590.0,218.2 L591.0,218.2 L591.0,216.0 L592.0,216.0 L592.0,217.6 L593.0,217.6 L593.0,218.9 L594.0,218.9 L594.0,219.2 L595.0,219.2 L595.0,217.0 L596.0,217.0 L596.0,218.8 L597.0,218.8 L597.0,219.9 L598.0,219.9 L598.0,216.7 L599.0,216.7 L599.0,219.8 L600.0,219.8 L600.0,220.3 L601.0,220.3 L601.0,215.8 L602.0,215.8 L602.0,219.6 L603.0,219.6 L603.0,219.2 L604.0,219.2 L604.0,220.4 L605.0,220.4 L605.0,218.9 L606.0,218.9 L606.0,218.4 L607.0,218.4 L607.0,220.3 L608.0,220.3 L608.0,219.7 L609.0,219.7 L609.0,219.8 L610.0,219.8 L610.0,217.8 L611.0,217.8 L611.0,215.0 L612.0,215.0 L612.0,216.6 L613.0,216.6 L613.0,218.6 L614.0,218.6 L614.0,216.9 L615.0,216.9 L615.0,216.3 L616.0,216.3 L616.0,219.3 L617.0,219.3 L617.0,219.4 L618.0,219.4 L618.0,219.4 L619.0,219.4 L619.0,217.4 L620.0,217.4 L620.0,219.9 L621.0,219.9 L621.0,218.0 L622.0,218.0 L622.0,220.5 L623.0,220.5 L623.0,217.7 L624.0,217.7 L624.0,216.0 L625.0,216.0 L625.0,216.9 L626.0,216.9 L626.0,217.3 L627.0,217.3 L627.0,218.2 L628.0,218.2 L628.0,218.5 L629.0,218.5 L629.0,217.8 L630.0,217.8 L630.0,216.7 L631.0,216.7 L631.0,217.7 L632.0,217.7 L632.0,216.7 L633.0,216.7 L633.0,218.6 L634.0,218.6 L634.0,218.6 L635.0,218.6 L635.0,218.1 L636.0,218.1 L636.0,217.2 L637.0,217.2 L637.0,216.3 L638.0,216.3 L638.0,218.5 L639.0,218.5 L639.0,218.2 L640.0,218.2 L640.0,218.9 L641.0,218.9 L641.0,218.7 L642.0,218.7 L642.0,220.1 L643.0,220.1 L643.0,218.7 L644.0,218.7 L644.0,219.2 L645.0,219.2 L645.0,220.3 L646.0,220.3 L646.0,218.8 L647.0,218.8 L647.0,220.1 L648.0,220.1 L648.0,216.6 L649.0,216.6 L649.0,220.5 L650.0,220.5 L650.0,217.8 L651.0,217.8 L651.0,219.7 L652.0,219.7 L652.0,219.7 L653.0,219.7 L653.0,218.7 L654.0,218.7 L654.0,221.1 L655.0,221.1 L655.0,218.8 L656.0,218.8 L656.0,220.2 L657.0,220.2 L657.0,219.5 L658.0,219.5 L658.0,220.1 L659.0,220.1 L659.0,219.0 L660.0,219.0 L660.0,217.7 L661.0,217.7 L661.0,219.8 L662.0,219.8 L662.0,219.4 L663.0,219.4 L663.0,220.9 L664.0,220.9 L664.0,220.5 L665.0,220.5 L665.0,220.7 L666.0,220.7 L666.0,220.9 L667.0,220.9 L667.0,219.9 L668.0,219.9 L668.0,221.5 L669.0,221.5 L669.0,219.1 L670.0,219.1 L670.0,220.1 L671.0,220.1 L671.0,216.6 L672.0,216.6 L672.0,219.6 L673.0,219.6 L673.0,220.1 L674.0,220.1 L674.0,220.3 L675.0,220.3 L675.0,219.0 L676.0,219.0 L676.0,217.5 L677.0,217.5 L677.0,220.1 L678.0,220.1 L678.0,221.3 L679.0,221.3 L679.0,220.6 L680.0,220.6 L680.0,220.1 L681.0,220.1 L681.0,219.5 L682.0,219.5 L682.0,220.2 L683.0,220.2 L683.0,220.6 L684.0,220.6 L684.0,216.8 L685.0,216.8 L685.0,219.1 L686.0,219.1 L686.0,220.4 L687.0,220.4 L687.0,218.2 L688.0,218.2 L688.0,218.2 L689.0,218.2 L689.0,219.6 L690.0,219.6 L690.0,218.5 L691.0,218.5 L691.0,218.0 L692.0,218.0 L692.0,220.2 L693.0,220.2 L693.0,219.9 L694.0,219.9 L694.0,218.8 L695.0,218.8 L695.0,218.4 L696.0,218.4 L696.0,220.2 L697.0,220.2 L697.0,219.6 L698.0,219.6 L698.0,217.7 L699.0,217.7 L699.0,219.0 L700.0,219.0 L700.0,219.2 L701.0,219.2 L701.0,219.3 L702.0,219.3 L702.0,217.5 L703.0,217.5 L703.0,219.2 L704.0,219.2 L704.0,218.4 L705.0,218.4 L705.0,217.5 L706.0,217.5 L706.0,217.6 L707.0,217.6 L707.0,219.6 L708.0,219.6 L708.0,219.8 L709.0,219.8 L709.0,218.1 L710.0,218.1 L710.0,218.8 L711.0,218.8 L711.0,218.3 L712.0,218.3 L712.0,219.4 L713.0,219.4 L713.0,219.0 L714.0,219.0 L714.0,219.1 L715.0,219.1 L715.0,221.0 L716.0,221.0 L716.0,218.7 L717.0,218.7 L717.0,220.7 L718.0,220.7 L718.0,219.6 L719.0,219.6 L719.0,219.3 L720.0,219.3 L720.0,219.3 L721.0,219.3 L721.0,219.2 L722.0,219.2 L722.0,220.1 L723.0,220.1 L723.0,220.7 L724.0,220.7 L724.0,221.4 L725.0,221.4 L725.0,220.9 L726.0,220.9 L726.0,220.5 L727.0,220.5 L727.0,220.7 L728.0,220.7 L728.0,219.8 L729.0,219.8 L729.0,220.1 L730.0,220.1 L730.0,220.2 L731.0,220.2 L731.0,220.3 L732.0,220.3 L732.0,221.4 L733.0,221.4 L733.0,220.5 L734.0,220.5 L734.0,219.1 L735.0,219.1 L735.0,221.9 L736.0,221.9 L736.0,218.9 L737.0,218.9 L737.0,220.4 L738.0,220.4 L738.0,220.9 L739.0,220.9 L739.0,221.3 L740.0,221.3 L740.0,221.5 L741.0,221.5 L741.0,220.1 L742.0,220.1 L742.0,222.3 L743.0,222.3 L743.0,223.2 L744.0,223.2 L744.0,221.6 L745.0,221.6 L745.0,224.0 L746.0,224.0 L746.0,222.5 L747.0,222.5 L747.0,223.6 L748.0,223.6 L748.0,222.5 L749.0,222.5 L749.0,223.6 L750.0,223.6 L750.0,223.7 L751.0,223.7 L751.0,224.0 L752.0,224.0 L752.0,224.4 L753.0,224.4 L753.0,223.2 L754.0,223.2 L754.0,222.9 L755.0,222.9 L755.0,231.6 L754.0,231.6 L754.0,232.3 L753.0,232.3 L753.0,231.5 L752.0,231.5 L752.0,232.0 L751.0,232.0 L751.0,231.7 L750.0,231.7 L750.0,231.5 L749.0,231.5 L749.0,232.9 L748.0,232.9 L748.0,231.7 L747.0,231.7 L747.0,230.7 L746.0,230.7 L746.0,233.1 L745.0,233.1 L745.0,231.6 L744.0,231.6 L744.0,232.5 L743.0,232.5 L743.0,232.3 L742.0,232.3 L742.0,233.7 L741.0,233.7 L741.0,233.9 L740.0,233.9 L740.0,232.4 L739.0,232.4 L739.0,233.4 L738.0,233.4 L738.0,232.5 L737.0,232.5 L737.0,233.4 L736.0,233.4 L736.0,233.7 L735.0,233.7 L735.0,235.9 L734.0,235.9 L734.0,234.0 L733.0,234.0 L733.0,234.2 L732.0,234.2 L732.0,234.0 L731.0,234.0 L731.0,236.7 L730.0,236.7 L730.0,233.4 L729.0,233.4 L729.0,232.7 L728.0,232.7 L728.0,233.0 L727.0,233.0 L727.0,235.1 L726.0,235.1 L726.0,233.2 L725.0,233.2 L725.0,234.2 L724.0,234.2 L724.0,234.3 L723.0,234.3 L723.0,234.8 L722.0,234.8 L722.0,234.7 L721.0,234.7 L721.0,236.5 L720.0,236.5 L720.0,235.0 L719.0,235.0 L719.0,233.9 L718.0,233.9 L718.0,233.3 L717.0,233.3 L717.0,236.8 L716.0,236.8 L716.0,233.6 L715.0,233.6 L715.0,234.1 L714.0,234.1 L714.0,236.0 L713.0,236.0 L713.0,234.6 L712.0,234.6 L712.0,235.6 L711.0,235.6 L711.0,235.8 L710.0,235.8 L710.0,235.8 L709.0,235.8 L709.0,235.7 L708.0,235.7 L708.0,237.1 L707.0,237.1 L707.0,235.9 L706.0,235.9 L706.0,235.1 L705.0,235.1 L705.0,233.3 L704.0,233.3 L704.0,234.4 L703.0,234.4 L703.0,234.2 L702.0,234.2 L702.0,235.0 L701.0,235.0 L701.0,236.5 L700.0,236.5 L700.0,236.6 L699.0,236.6 L699.0,236.0 L698.0,236.0 L698.0,235.8 L697.0,235.8 L697.0,237.7 L696.0,237.7 L696.0,234.5 L695.0,234.5 L695.0,236.1 L694.0,236.1 L694.0,234.4 L693.0,234.4 L693.0,234.3 L692.0,234.3 L692.0,235.2 L691.0,235.2 L691.0,236.0 L690.0,236.0 L690.0,235.0 L689.0,235.0 L689.0,233.4 L688.0,233.4 L688.0,234.6 L687.0,234.6 L687.0,237.4 L686.0,237.4 L686.0,238.0 L685.0,238.0 L685.0,234.1 L684.0,234.1 L684.0,235.7 L683.0,235.7 L683.0,236.3 L682.0,236.3 L682.0,234.9 L681.0,234.9 L681.0,234.6 L680.0,234.6 L680.0,236.6 L679.0,236.6 L679.0,236.9 L678.0,236.9 L678.0,235.3 L677.0,235.3 L677.0,234.8 L676.0,234.8 L676.0,234.3 L675.0,234.3 L675.0,237.3 L674.0,237.3 L674.0,234.7 L673.0,234.7 L673.0,236.1 L672.0,236.1 L672.0,235.6 L671.0,235.6 L671.0,237.3 L670.0,237.3 L670.0,236.3 L669.0,236.3 L669.0,235.7 L668.0,235.7 L668.0,235.7 L667.0,235.7 L667.0,236.6 L666.0,236.6 L666.0,235.7 L665.0,235.7 L665.0,238.7 L664.0,238.7 L664.0,235.1 L663.0,235.1 L663.0,234.7 L662.0,234.7 L662.0,235.5 L661.0,235.5 L661.0,236.7 L660.0,236.7 L660.0,236.0 L659.0,236.0 L659.0,238.4 L658.0,238.4 L658.0,238.6 L657.0,238.6 L657.0,235.7 L656.0,235.7 L656.0,235.4 L655.0,235.4 L655.0,235.4 L654.0,235.4 L654.0,235.9 L653.0,235.9 L653.0,235.1 L652.0,235.1 L652.0,236.8 L651.0,236.8 L651.0,235.5 L650.0,235.5 L650.0,237.8 L649.0,237.8 L649.0,236.4 L648.0,236.4 L648.0,234.9 L647.0,234.9 L647.0,235.5 L646.0,235.5 L646.0,235.0 L645.0,235.0 L645.0,235.2 L644.0,235.2 L644.0,237.4 L643.0,237.4 L643.0,235.2 L642.0,235.2 L642.0,235.3 L641.0,235.3 L641.0,238.0 L640.0,238.0 L640.0,238.9 L639.0,238.9 L639.0,234.5 L638.0,234.5 L638.0,234.6 L637.0,234.6 L637.0,235.9 L636.0,235.9 L636.0,236.5 L635.0,236.5 L635.0,237.1 L634.0,237.1 L634.0,237.2 L633.0,237.2 L633.0,238.7 L632.0,238.7 L632.0,237.3 L631.0,237.3 L631.0,236.4 L630.0,236.4 L630.0,236.4 L629.0,236.4 L629.0,234.6 L628.0,234.6 L628.0,237.5 L627.0,237.5 L627.0,239.2 L626.0,239.2 L626.0,234.6 L625.0,234.6 L625.0,235.2 L624.0,235.2 L624.0,238.6 L623.0,238.6 L623.0,237.2 L622.0,237.2 L622.0,237.4 L621.0,237.4 L621.0,238.0 L620.0,238.0 L620.0,236.5 L619.0,236.5 L619.0,237.5 L618.0,237.5 L618.0,237.1 L617.0,237.1 L617.0,234.8 L616.0,234.8 L616.0,238.6 L615.0,238.6 L615.0,235.5 L614.0,235.5 L614.0,235.5 L613.0,235.5 L613.0,235.8 L612.0,235.8 L612.0,236.1 L611.0,236.1 L611.0,236.9 L610.0,236.9 L610.0,237.6 L609.0,237.6 L609.0,238.1 L608.0,238.1 L608.0,239.8 L607.0,239.8 L607.0,237.7 L606.0,237.7 L606.0,238.8 L605.0,238.8 L605.0,236.5 L604.0,236.5 L604.0,236.8 L603.0,236.8 L603.0,237.3 L602.0,237.3 L602.0,235.6 L601.0,235.6 L601.0,237.4 L600.0,237.4 L600.0,238.3 L599.0,238.3 L599.0,237.9 L598.0,237.9 L598.0,238.6 L597.0,238.6 L597.0,235.4 L596.0,235.4 L596.0,238.1 L595.0,238.1 L595.0,237.1 L594.0,237.1 L594.0,236.8 L593.0,236.8 L593.0,237.6 L592.0,237.6 L592.0,239.0 L591.0,239.0 L591.0,235.1 L590.0,235.1 L590.0,235.1 L589.0,235.1 L589.0,236.5 L588.0,236.5 L588.0,235.6 L587.0,235.6 L587.0,237.2 L586.0,237.2 L586.0,238.0 L585.0,238.0 L585.0,237.8 L584.0,237.8 L584.0,237.4 L583.0,237.4 L583.0,235.2 L582.0,235.2 L582.0,236.2 L581.0,236.2 L581.0,234.9 L580.0,234.9 L580.0,234.9 L579.0,234.9 L579.0,235.1 L578.0,235.1 L578.0,236.5 L577.0,236.5 L577.0,235.7 L576.0,235.7 L576.0,234.7 L575.0,234.7 L575.0,240.3 L574.0,240.3 L574.0,234.6 L573.0,234.6 L573.0,235.2 L572.0,235.2 L572.0,235.5 L571.0,235.5 L571.0,239.4 L570.0,239.4 L570.0,237.5 L569.0,237.5 L569.0,235.9 L568.0,235.9 L568.0,237.0 L567.0,237.0 L567.0,238.3 L566.0,238.3 L566.0,236.0 L565.0,236.0 L565.0,235.5 L564.0,235.5 L564.0,235.7 L563.0,235.7 L563.0,235.2 L562.0,235.2 L562.0,240.2 L561.0,240.2 L561.0,239.8 L560.0,239.8 L560.0,239.8 L559.0,239.8 L559.0,234.6 L558.0,234.6 L558.0,239.4 L557.0,239.4 L557.0,235.3 L556.0,235.3 L556.0,235.8 L555.0,235.8 L555.0,237.0 L554.0,237.0 L554.0,236.4 L553.0,236.4 L553.0,236.2 L552.0,236.2 L552.0,235.7 L551.0,235.7 L551.0,239.6 L550.0,239.6 L550.0,240.7 L549.0,240.7 L549.0,239.3 L548.0,239.3 L548.0,237.4 L547.0,237.4 L547.0,235.7 L546.0,235.7 L546.0,236.0 L545.0,236.0 L545.0,238.1 L544.0,238.1 L544.0,237.1 L543.0,237.1 L543.0,237.6 L542.0,237.6 L542.0,240.7 L541.0,240.7 L541.0,239.9 L540.0,239.9 L540.0,235.4 L539.0,235.4 L539.0,234.8 L538.0,234.8 L538.0,239.2 L537.0,239.2 L537.0,235.6 L536.0,235.6 L536.0,235.7 L535.0,235.7 L535.0,235.9 L534.0,235.9 L534.0,238.3 L533.0,238.3 L533.0,237.0 L532.0,237.0 L532.0,239.1 L531.0,239.1 L531.0,236.5 L530.0,236.5 L530.0,237.5 L529.0,237.5 L529.0,237.4 L528.0,237.4 L528.0,235.7 L527.0,235.7 L527.0,236.7 L526.0,236.7 L526.0,237.1 L525.0,237.1 L525.0,240.5 L524.0,240.5 L524.0,237.2 L523.0,237.2 L523.0,237.3 L522.0,237.3 L522.0,234.6 L521.0,234.6 L521.0,235.7 L520.0,235.7 L520.0,235.9 L519.0,235.9 L519.0,236.3 L518.0,236.3 L518.0,235.7 L517.0,235.7 L517.0,235.4 L516.0,235.4 L516.0,235.7 L515.0,235.7 L515.0,235.3 L514.0,235.3 L514.0,238.0 L513.0,238.0 L513.0,236.4 L512.0,236.4 L512.0,236.4 L511.0,236.4 L511.0,237.9 L510.0,237.9 L510.0,236.0 L509.0,236.0 L509.0,237.0 L508.0,237.0 L508.0,237.4 L507.0,237.4 L507.0,237.7 L506.0,237.7 L506.0,238.3 L505.0,238.3 L505.0,239.7 L504.0,239.7 L504.0,238.1 L503.0,238.1 L503.0,239.0 L502.0,239.0 L502.0,238.2 L501.0,238.2 L501.0,236.3 L500.0,236.3 L500.0,237.5 L499.0,237.5 L499.0,237.0 L498.0,237.0 L498.0,236.1 L497.0,236.1 L497.0,235.3 L496.0,235.3 L496.0,237.2 L495.0,237.2 L495.0,240.5 L494.0,240.5 L494.0,235.4 L493.0,235.4 L493.0,235.1 L492.0,235.1 L492.0,237.5 L491.0,237.5 L491.0,236.2 L490.0,236.2 L490.0,237.3 L489.0,237.3 L489.0,238.0 L488.0,238.0 L488.0,235.9 L487.0,235.9 L487.0,239.3 L486.0,239.3 L486.0,236.9 L485.0,236.9 L485.0,237.5 L484.0,237.5 L484.0,238.3 L483.0,238.3 L483.0,235.8 L482.0,235.8 L482.0,238.5 L481.0,238.5 L481.0,240.3 L480.0,240.3 L480.0,238.1 L479.0,238.1 L479.0,240.3 L478.0,240.3 L478.0,236.6 L477.0,236.6 L477.0,237.0 L476.0,237.0 L476.0,237.7 L475.0,237.7 L475.0,237.4 L474.0,237.4 L474.0,241.1 L473.0,241.1 L473.0,236.8 L472.0,236.8 L472.0,237.3 L471.0,237.3 L471.0,238.4 L470.0,238.4 L470.0,240.3 L469.0,240.3 L469.0,237.0 L468.0,237.0 L468.0,237.8 L467.0,237.8 L467.0,236.6 L466.0,236.6 L466.0,236.7 L465.0,236.7 L465.0,237.9 L464.0,237.9 L464.0,238.4 L463.0,238.4 L463.0,235.8 L462.0,235.8 L462.0,240.5 L461.0,240.5 L461.0,236.4 L460.0,236.4 L460.0,238.6 L459.0,238.6 L459.0,241.0 L458.0,241.0 L458.0,236.7 L457.0,236.7 L457.0,237.3 L456.0,237.3 L456.0,240.4 L455.0,240.4 L455.0,238.0 L454.0,238.0 L454.0,236.9 L453.0,236.9 L453.0,237.7 L452.0,237.7 L452.0,238.2 L451.0,238.2 L451.0,239.6 L450.0,239.6 L450.0,239.7 L449.0,239.7 L449.0,239.6 L448.0,239.6 L448.0,238.2 L447.0,238.2 L447.0,238.5 L446.0,238.5 L446.0,240.9 L445.0,240.9 L445.0,235.5 L444.0,235.5 L444.0,236.4 L443.0,236.4 L443.0,238.0 L442.0,238.0 L442.0,238.0 L441.0,238.0 L441.0,236.5 L440.0,236.5 L440.0,236.7 L439.0,236.7 L439.0,236.2 L438.0,236.2 L438.0,236.2 L437.0,236.2 L437.0,237.7 L436.0,237.7 L436.0,235.3 L435.0,235.3 L435.0,240.1 L434.0,240.1 L434.0,236.5 L433.0,236.5 L433.0,238.7 L432.0,238.7 L432.0,238.7 L431.0,238.7 L431.0,240.2 L430.0,240.2 L430.0,238.8 L429.0,238.8 L429.0,238.9 L428.0,238.9 L428.0,238.0 L427.0,238.0 L427.0,236.8 L426.0,236.8 L426.0,239.0 L425.0,239.0 L425.0,237.9 L424.0,237.9 L424.0,237.7 L423.0,237.7 L423.0,238.1 L422.0,238.1 L422.0,239.1 L421.0,239.1 L421.0,238.5 L420.0,238.5 L420.0,240.1 L419.0,240.1 L419.0,240.3 L418.0,240.3 L418.0,240.1 L417.0,240.1 L417.0,239.7 L416.0,239.7 L416.0,239.6 L415.0,239.6 L415.0,237.8 L414.0,237.8 L414.0,237.5 L413.0,237.5 L413.0,236.2 L412.0,236.2 L412.0,236.6 L411.0,236.6 L411.0,240.7 L410.0,240.7 L410.0,237.0 L409.0,237.0 L409.0,239.8 L408.0,239.8 L408.0,236.0 L407.0,236.0 L407.0,241.2 L406.0,241.2 L406.0,239.6 L405.0,239.6 L405.0,237.8 L404.0,237.8 L404.0,237.8 L403.0,237.8 L403.0,238.9 L402.0,238.9 L402.0,240.7 L401.0,240.7 L401.0,239.4 L400.0,239.4 L400.0,238.4 L399.0,238.4 L399.0,236.9 L398.0,236.9 L398.0,239.1 L397.0,239.1 L397.0,235.4 L396.0,235.4 L396.0,238.8 L395.0,238.8 L395.0,237.9 L394.0,237.9 L394.0,236.1 L393.0,236.1 L393.0,236.3 L392.0,236.3 L392.0,239.7 L391.0,239.7 L391.0,237.6 L390.0,237.6 L390.0,238.9 L389.0,238.9 L389.0,238.6 L388.0,238.6 L388.0,237.0 L387.0,237.0 L387.0,241.1 L386.0,241.1 L386.0,239.9 L385.0,239.9 L385.0,239.2 L384.0,239.2 L384.0,238.2 L383.0,238.2 L383.0,238.5 L382.0,238.5 L382.0,238.9 L381.0,238.9 L381.0,239.7 L380.0,239.7 L380.0,239.6 L379.0,239.6 L379.0,237.8 L378.0,237.8 L378.0,237.6 L377.0,237.6 L377.0,238.3 L376.0,238.3 L376.0,239.8 L375.0,239.8 L375.0,238.8 L374.0,238.8 L374.0,241.6 L373.0,241.6 L373.0,241.4 L372.0,241.4 L372.0,238.3 L371.0,238.3 L371.0,238.9 L370.0,238.9 L370.0,238.1 L369.0,238.1 L369.0,236.2 L368.0,236.2 L368.0,238.5 L367.0,238.5 L367.0,238.2 L366.0,238.2 L366.0,238.0 L365.0,238.0 L365.0,239.6 L364.0,239.6 L364.0,241.6 L363.0,241.6 L363.0,238.7 L362.0,238.7 L362.0,238.1 L361.0,238.1 L361.0,236.7 L360.0,236.7 L360.0,238.8 L359.0,238.8 L359.0,238.5 L358.0,238.5 L358.0,239.1 L357.0,239.1 L357.0,238.8 L356.0,238.8 L356.0,237.2 L355.0,237.2 L355.0,239.5 L354.0,239.5 L354.0,238.4 L353.0,238.4 L353.0,236.6 L352.0,236.6 L352.0,239.1 L351.0,239.1 L351.0,238.0 L350.0,238.0 L350.0,241.6 L349.0,241.6 L349.0,240.8 L348.0,240.8 L348.0,237.2 L347.0,237.2 L347.0,235.9 L346.0,235.9 L346.0,236.7 L345.0,236.7 L345.0,236.6 L344.0,236.6 L344.0,236.5 L343.0,236.5 L343.0,235.7 L342.0,235.7 L342.0,239.7 L341.0,239.7 L341.0,237.7 L340.0,237.7 L340.0,238.4 L339.0,238.4 L339.0,235.8 L338.0,235.8 L338.0,237.7 L337.0,237.7 L337.0,239.8 L336.0,239.8 L336.0,238.7 L335.0,238.7 L335.0,241.9 L334.0,241.9 L334.0,238.5 L333.0,238.5 L333.0,238.5 L332.0,238.5 L332.0,237.6 L331.0,237.6 L331.0,241.4 L330.0,241.4 L330.0,237.2 L329.0,237.2 L329.0,239.1 L328.0,239.1 L328.0,239.9 L327.0,239.9 L327.0,239.7 L326.0,239.7 L326.0,237.7 L325.0,237.7 L325.0,237.6 L324.0,237.6 L324.0,239.0 L323.0,239.0 L323.0,238.4 L322.0,238.4 L322.0,236.7 L321.0,236.7 L321.0,239.2 L320.0,239.2 L320.0,239.0 L319.0,239.0 L319.0,240.0 L318.0,240.0 L318.0,236.8 L317.0,236.8 L317.0,238.5 L316.0,238.5 L316.0,238.1 L315.0,238.1 L315.0,238.1 L314.0,238.1 L314.0,237.9 L313.0,237.9 L313.0,240.8 L312.0,240.8 L312.0,237.4 L311.0,237.4 L311.0,237.8 L310.0,237.8 L310.0,238.9 L309.0,238.9 L309.0,239.8 L308.0,239.8 L308.0,241.2 L307.0,241.2 L307.0,239.2 L306.0,239.2 L306.0,238.3 L305.0,238.3 L305.0,237.5 L304.0,237.5 L304.0,236.4 L303.0,236.4 L303.0,237.0 L302.0,237.0 L302.0,235.9 L301.0,235.9 L301.0,237.4 L300.0,237.4 L300.0,240.3 L299.0,240.3 L299.0,237.6 L298.0,237.6 L298.0,238.4 L297.0,238.4 L297.0,236.4 L296.0,236.4 L296.0,235.8 L295.0,235.8 L295.0,238.3 L294.0,238.3 L294.0,241.9 L293.0,241.9 L293.0,238.7 L292.0,238.7 L292.0,239.5 L291.0,239.5 L291.0,237.0 L290.0,237.0 L290.0,239.7 L289.0,239.7 L289.0,239.0 L288.0,239.0 L288.0,238.1 L287.0,238.1 L287.0,236.1 L286.0,236.1 L286.0,238.3 L285.0,238.3 L285.0,236.1 L284.0,236.1 L284.0,238.5 L283.0,238.5Z" fill="#10f010"/><path d="M54.0,424.3 L55.0,424.3 L55.0,423.9 L56.0,423.9 L56.0,423.9 L57.0,423.9 L57.0,425.3 L58.0,425.3 L58.0,424.4 L59.0,424.4 L59.0,422.0 L60.0,422.0 L60.0,425.0 L61.0,425.0 L61.0,421.3 L62.0,421.3 L62.0,426.4 L63.0,426.4 L63.0,425.9 L64.0,425.9 L64.0,422.6 L65.0,422.6 L65.0,423.3 L66.0,423.3 L66.0,423.4 L67.0,423.4 L67.0,422.9 L68.0,422.9 L68.0,423.9 L69.0,423.9 L69.0,424.3 L70.0,424.3 L70.0,421.9 L71.0,421.9 L71.0,424.3 L72.0,424.3 L72.0,423.4 L73.0,423.4 L73.0,424.3 L74.0,424.3 L74.0,424.8 L75.0,424.8 L75.0,424.3 L76.0,424.3 L76.0,425.0 L77.0,425.0 L77.0,423.0 L78.0,423.0 L78.0,423.4 L79.0,423.4 L79.0,421.4 L80.0,421.4 L80.0,422.1 L81.0,422.1 L81.0,422.4 L82.0,422.4 L82.0,425.1 L83.0,425.1 L83.0,420.1 L84.0,420.1 L84.0,422.8 L85.0,422.8 L85.0,423.5 L86.0,423.5 L86.0,423.6 L87.0,423.6 L87.0,421.2 L88.0,421.2 L88.0,424.5 L89.0,424.5 L89.0,421.7 L90.0,421.7 L90.0,424.4 L91.0,424.4 L91.0,421.3 L92.0,421.3 L92.0,422.2 L93.0,422.2 L93.0,420.9 L94.0,420.9 L94.0,419.9 L95.0,419.9 L95.0,419.0 L96.0,419.0 L96.0,417.4 L97.0,417.4 L97.0,421.1 L98.0,421.1 L98.0,416.6 L99.0,416.6 L99.0,417.5 L100.0,417.5 L100.0,422.0 L101.0,422.0 L101.0,417.6 L102.0,417.6 L102.0,417.9 L103.0,417.9 L103.0,452.3 L102.0,452.3 L102.0,449.7 L101.0,449.7 L101.0,447.1 L100.0,447.1 L100.0,451.5 L99.0,451.5 L99.0,447.0 L98.0,447.0 L98.0,447.2 L97.0,447.2 L97.0,451.3 L96.0,451.3 L96.0,449.8 L95.0,449.8 L95.0,450.0 L94.0,450.0 L94.0,449.7 L93.0,449.7 L93.0,444.7 L92.0,444.7 L92.0,446.4 L91.0,446.4 L91.0,444.1 L90.0,444.1 L90.0,446.7 L89.0,446.7 L89.0,442.2 L88.0,442.2 L88.0,440.4 L87.0,440.4 L87.0,442.9 L86.0,442.9 L86.0,441.3 L85.0,441.3 L85.0,442.8 L84.0,442.8 L84.0,442.7 L83.0,442.7 L83.0,446.3 L82.0,446.3 L82.0,446.8 L81.0,446.8 L81.0,447.4 L80.0,447.4 L80.0,443.7 L79.0,443.7 L79.0,442.8 L78.0,442.8 L78.0,449.4 L77.0,449.4 L77.0,443.3 L76.0,443.3 L76.0,441.1 L75.0,441.1 L75.0,441.5 L74.0,441.5 L74.0,441.7 L73.0,441.7 L73.0,442.9 L72.0,442.9 L72.0,443.3 L71.0,443.3 L71.0,442.9 L70.0,442.9 L70.0,442.2 L69.0,442.2 L69.0,443.2 L68.0,443.2 L68.0,445.7 L67.0,445.7 L67.0,442.3 L66.0,442.3 L66.0,446.9 L65.0,446.9 L65.0,444.0 L64.0,444.0 L64.0,442.6 L63.0,442.6 L63.0,443.5 L62.0,443.5 L62.0,450.5 L61.0,450.5 L61.0,443.0 L60.0,443.0 L60.0,443.4 L59.0,443.4 L59.0,442.3 L58.0,442.3 L58.0,448.4 L57.0,448.4 L57.0,445.3 L56.0,445.3 L56.0,446.5 L55.0,446.5 L55.0,449.5 L54.0,449.5Z" fill="#10f010"/><path d="M103.0,420.4 L104.0,420.4 L104.0,416.8 L105.0,416.8 L105.0,417.4 L106.0,417.4 L106.0,421.4 L107.0,421.4 L107.0,422.0 L108.0,422.0 L108.0,422.2 L109.0,422.2 L109.0,415.2 L110.0,415.2 L110.0,420.5 L111.0,420.5 L111.0,421.7 L112.0,421.7 L112.0,420.2 L113.0,420.2 L113.0,421.5 L114.0,421.5 L114.0,424.7 L115.0,424.7 L115.0,421.2 L116.0,421.2 L116.0,421.1 L117.0,421.1 L117.0,418.7 L118.0,418.7 L118.0,423.8 L119.0,423.8 L119.0,425.9 L120.0,425.9 L120.0,420.8 L121.0,420.8 L121.0,422.4 L122.0,422.4 L122.0,423.9 L123.0,423.9 L123.0,427.0 L124.0,427.0 L124.0,426.8 L125.0,426.8 L125.0,424.3 L126.0,424.3 L126.0,424.8 L127.0,424.8 L127.0,424.3 L128.0,424.3 L128.0,424.5 L129.0,424.5 L129.0,425.4 L130.0,425.4 L130.0,425.5 L131.0,425.5 L131.0,424.5 L132.0,424.5 L132.0,426.5 L133.0,426.5 L133.0,426.4 L134.0,426.4 L134.0,429.2 L135.0,429.2 L135.0,425.8 L136.0,425.8 L136.0,428.8 L137.0,428.8 L137.0,427.5 L138.0,427.5 L138.0,428.9 L139.0,428.9 L139.0,427.9 L140.0,427.9 L140.0,428.1 L141.0,428.1 L141.0,429.2 L142.0,429.2 L142.0,429.5 L143.0,429.5 L143.0,429.7 L144.0,429.7 L144.0,427.7 L145.0,427.7 L145.0,427.8 L146.0,427.8 L146.0,430.0 L147.0,430.0 L147.0,430.1 L148.0,430.1 L148.0,430.6 L149.0,430.6 L149.0,430.3 L150.0,430.3 L150.0,431.6 L151.0,431.6 L151.0,431.6 L152.0,431.6 L152.0,431.2 L153.0,431.2 L153.0,428.6 L154.0,428.6 L154.0,430.4 L155.0,430.4 L155.0,430.2 L156.0,430.2 L156.0,430.1 L157.0,430.1 L157.0,426.6 L158.0,426.6 L158.0,426.5 L159.0,426.5 L159.0,425.5 L160.0,425.5 L160.0,425.0 L161.0,425.0 L161.0,425.4 L162.0,425.4 L162.0,422.3 L163.0,422.3 L163.0,421.7 L164.0,421.7 L164.0,424.9 L165.0,424.9 L165.0,424.3 L166.0,424.3 L166.0,423.2 L167.0,423.2 L167.0,424.3 L168.0,424.3 L168.0,418.0 L169.0,418.0 L169.0,425.1 L170.0,425.1 L170.0,424.3 L171.0,424.3 L171.0,423.1 L172.0,423.1 L172.0,424.6 L173.0,424.6 L173.0,426.1 L174.0,426.1 L174.0,426.7 L175.0,426.7 L175.0,426.2 L176.0,426.2 L176.0,425.0 L177.0,425.0 L177.0,417.9 L178.0,417.9 L178.0,426.9 L179.0,426.9 L179.0,424.9 L180.0,424.9 L180.0,427.6 L181.0,427.6 L181.0,427.5 L182.0,427.5 L182.0,427.1 L183.0,427.1 L183.0,427.2 L184.0,427.2 L184.0,423.3 L185.0,423.3 L185.0,424.8 L186.0,424.8 L186.0,427.2 L187.0,427.2 L187.0,425.5 L188.0,425.5 L188.0,426.6 L189.0,426.6 L189.0,424.6 L190.0,424.6 L190.0,420.1 L191.0,420.1 L191.0,426.5 L192.0,426.5 L192.0,426.5 L193.0,426.5 L193.0,422.1 L194.0,422.1 L194.0,426.1 L195.0,426.1 L195.0,427.5 L196.0,427.5 L196.0,426.6 L197.0,426.6 L197.0,425.7 L198.0,425.7 L198.0,420.5 L199.0,420.5 L199.0,421.8 L200.0,421.8 L200.0,425.9 L201.0,425.9 L201.0,424.1 L202.0,424.1 L202.0,425.2 L203.0,425.2 L203.0,424.3 L204.0,424.3 L204.0,425.6 L205.0,425.6 L205.0,424.8 L206.0,424.8 L206.0,427.4 L207.0,427.4 L207.0,424.9 L208.0,424.9 L208.0,425.6 L209.0,425.6 L209.0,426.3 L210.0,426.3 L210.0,424.5 L211.0,424.5 L211.0,424.7 L212.0,424.7 L212.0,427.2 L213.0,427.2 L213.0,426.3 L214.0,426.3 L214.0,425.7 L215.0,425.7 L215.0,425.4 L216.0,425.4 L216.0,422.0 L217.0,422.0 L217.0,423.6 L218.0,423.6 L218.0,424.9 L219.0,424.9 L219.0,425.9 L220.0,425.9 L220.0,426.6 L221.0,426.6 L221.0,424.8 L222.0,424.8 L222.0,425.1 L223.0,425.1 L223.0,424.7 L224.0,424.7 L224.0,426.2 L225.0,426.2 L225.0,426.9 L226.0,426.9 L226.0,426.7 L227.0,426.7 L227.0,427.5 L228.0,427.5 L228.0,425.2 L229.0,425.2 L229.0,424.4 L230.0,424.4 L230.0,424.7 L231.0,424.7 L231.0,425.1 L232.0,425.1 L232.0,425.6 L233.0,425.6 L233.0,427.3 L234.0,427.3 L234.0,427.2 L235.0,427.2 L235.0,421.7 L236.0,421.7 L236.0,423.7 L237.0,423.7 L237.0,427.4 L238.0,427.4 L238.0,425.8 L239.0,425.8 L239.0,424.7 L240.0,424.7 L240.0,426.8 L241.0,426.8 L241.0,424.5 L242.0,424.5 L242.0,427.0 L243.0,427.0 L243.0,424.5 L244.0,424.5 L244.0,425.0 L245.0,425.0 L245.0,425.4 L246.0,425.4 L246.0,425.0 L247.0,425.0 L247.0,426.0 L248.0,426.0 L248.0,426.0 L249.0,426.0 L249.0,426.4 L250.0,426.4 L250.0,429.4 L251.0,429.4 L251.0,430.8 L252.0,430.8 L252.0,430.2 L253.0,430.2 L253.0,429.8 L254.0,429.8 L254.0,430.2 L255.0,430.2 L255.0,430.5 L256.0,430.5 L256.0,428.9 L257.0,428.9 L257.0,426.4 L258.0,426.4 L258.0,424.4 L259.0,424.4 L259.0,419.1 L260.0,419.1 L260.0,421.9 L261.0,421.9 L261.0,419.9 L262.0,419.9 L262.0,419.3 L263.0,419.3 L263.0,421.6 L264.0,421.6 L264.0,420.3 L265.0,420.3 L265.0,423.0 L266.0,423.0 L266.0,419.5 L267.0,419.5 L267.0,424.4 L268.0,424.4 L268.0,421.1 L269.0,421.1 L269.0,422.8 L270.0,422.8 L270.0,424.0 L271.0,424.0 L271.0,421.5 L272.0,421.5 L272.0,423.2 L273.0,423.2 L273.0,423.2 L274.0,423.2 L274.0,422.2 L275.0,422.2 L275.0,424.4 L276.0,424.4 L276.0,421.2 L277.0,421.2 L277.0,421.5 L278.0,421.5 L278.0,423.1 L279.0,423.1 L279.0,423.9 L280.0,423.9 L280.0,423.0 L281.0,423.0 L281.0,419.4 L282.0,419.4 L282.0,422.7 L283.0,422.7 L283.0,451.0 L282.0,451.0 L282.0,445.3 L281.0,445.3 L281.0,448.3 L280.0,448.3 L280.0,445.4 L279.0,445.4 L279.0,447.0 L278.0,447.0 L278.0,445.3 L277.0,445.3 L277.0,445.6 L276.0,445.6 L276.0,451.1 L275.0,451.1 L275.0,446.5 L274.0,446.5 L274.0,447.1 L273.0,447.1 L273.0,449.4 L272.0,449.4 L272.0,447.9 L271.0,447.9 L271.0,444.9 L270.0,444.9 L270.0,449.5 L269.0,449.5 L269.0,443.3 L268.0,443.3 L268.0,448.4 L267.0,448.4 L267.0,449.5 L266.0,449.5 L266.0,448.4 L265.0,448.4 L265.0,444.6 L264.0,444.6 L264.0,448.7 L263.0,448.7 L263.0,448.5 L262.0,448.5 L262.0,450.0 L261.0,450.0 L261.0,449.9 L260.0,449.9 L260.0,450.4 L259.0,450.4 L259.0,444.6 L258.0,444.6 L258.0,442.1 L257.0,442.1 L257.0,438.7 L256.0,438.7 L256.0,439.9 L255.0,439.9 L255.0,439.7 L254.0,439.7 L254.0,439.4 L253.0,439.4 L253.0,440.0 L252.0,440.0 L252.0,439.6 L251.0,439.6 L251.0,441.3 L250.0,441.3 L250.0,445.0 L249.0,445.0 L249.0,446.9 L248.0,446.9 L248.0,446.1 L247.0,446.1 L247.0,447.3 L246.0,447.3 L246.0,446.5 L245.0,446.5 L245.0,447.5 L244.0,447.5 L244.0,446.0 L243.0,446.0 L243.0,444.8 L242.0,444.8 L242.0,443.9 L241.0,443.9 L241.0,447.1 L240.0,447.1 L240.0,447.4 L239.0,447.4 L239.0,445.0 L238.0,445.0 L238.0,444.9 L237.0,444.9 L237.0,444.0 L236.0,444.0 L236.0,445.9 L235.0,445.9 L235.0,445.1 L234.0,445.1 L234.0,444.3 L233.0,444.3 L233.0,443.1 L232.0,443.1 L232.0,444.1 L231.0,444.1 L231.0,442.3 L230.0,442.3 L230.0,442.4 L229.0,442.4 L229.0,443.8 L228.0,443.8 L228.0,445.6 L227.0,445.6 L227.0,446.8 L226.0,446.8 L226.0,443.4 L225.0,443.4 L225.0,447.7 L224.0,447.7 L224.0,444.5 L223.0,444.5 L223.0,444.4 L222.0,444.4 L222.0,444.4 L221.0,444.4 L221.0,445.6 L220.0,445.6 L220.0,447.4 L219.0,447.4 L219.0,443.0 L218.0,443.0 L218.0,444.6 L217.0,444.6 L217.0,446.2 L216.0,446.2 L216.0,447.5 L215.0,447.5 L215.0,446.0 L214.0,446.0 L214.0,447.4 L213.0,447.4 L213.0,445.1 L212.0,445.1 L212.0,445.2 L211.0,445.2 L211.0,444.8 L210.0,444.8 L210.0,444.9 L209.0,444.9 L209.0,446.0 L208.0,446.0 L208.0,446.0 L207.0,446.0 L207.0,446.1 L206.0,446.1 L206.0,443.9 L205.0,443.9 L205.0,445.5 L204.0,445.5 L204.0,447.5 L203.0,447.5 L203.0,443.3 L202.0,443.3 L202.0,444.6 L201.0,444.6 L201.0,444.1 L200.0,444.1 L200.0,442.5 L199.0,442.5 L199.0,442.8 L198.0,442.8 L198.0,446.2 L197.0,446.2 L197.0,443.5 L196.0,443.5 L196.0,444.5 L195.0,444.5 L195.0,444.2 L194.0,444.2 L194.0,446.5 L193.0,446.5 L193.0,443.4 L192.0,443.4 L192.0,445.0 L191.0,445.0 L191.0,446.3 L190.0,446.3 L190.0,444.2 L189.0,444.2 L189.0,443.6 L188.0,443.6 L188.0,443.5 L187.0,443.5 L187.0,443.7 L186.0,443.7 L186.0,443.0 L185.0,443.0 L185.0,445.4 L184.0,445.4 L184.0,444.2 L183.0,444.2 L183.0,444.4 L182.0,444.4 L182.0,444.1 L181.0,444.1 L181.0,444.6 L180.0,444.6 L180.0,448.0 L179.0,448.0 L179.0,444.2 L178.0,444.2 L178.0,446.0 L177.0,446.0 L177.0,446.6 L176.0,446.6 L176.0,445.6 L175.0,445.6 L175.0,444.4 L174.0,444.4 L174.0,446.2 L173.0,446.2 L173.0,445.9 L172.0,445.9 L172.0,445.6 L171.0,445.6 L171.0,445.1 L170.0,445.1 L170.0,445.7 L169.0,445.7 L169.0,446.0 L168.0,446.0 L168.0,447.0 L167.0,447.0 L167.0,445.5 L166.0,445.5 L166.0,446.1 L165.0,446.1 L165.0,446.2 L164.0,446.2 L164.0,446.3 L163.0,446.3 L163.0,444.9 L162.0,444.9 L162.0,445.0 L161.0,445.0 L161.0,446.1 L160.0,446.1 L160.0,443.2 L159.0,443.2 L159.0,443.9 L158.0,443.9 L158.0,442.2 L157.0,442.2 L157.0,440.4 L156.0,440.4 L156.0,439.5 L155.0,439.5 L155.0,438.5 L154.0,438.5 L154.0,437.9 L153.0,437.9 L153.0,438.5 L152.0,438.5 L152.0,439.2 L151.0,439.2 L151.0,437.9 L150.0,437.9 L150.0,440.0 L149.0,440.0 L149.0,437.9 L148.0,437.9 L148.0,440.5 L147.0,440.5 L147.0,438.5 L146.0,438.5 L146.0,441.0 L145.0,441.0 L145.0,440.0 L144.0,440.0 L144.0,440.7 L143.0,440.7 L143.0,441.5 L142.0,441.5 L142.0,441.1 L141.0,441.1 L141.0,441.8 L140.0,441.8 L140.0,440.5 L139.0,440.5 L139.0,440.9 L138.0,440.9 L138.0,441.7 L137.0,441.7 L137.0,441.7 L136.0,441.7 L136.0,439.9 L135.0,439.9 L135.0,442.4 L134.0,442.4 L134.0,441.3 L133.0,441.3 L133.0,443.8 L132.0,443.8 L132.0,442.9 L131.0,442.9 L131.0,442.8 L130.0,442.8 L130.0,443.7 L129.0,443.7 L129.0,442.3 L128.0,442.3 L128.0,442.1 L127.0,442.1 L127.0,446.0 L126.0,446.0 L126.0,444.5 L125.0,444.5 L125.0,442.2 L124.0,442.2 L124.0,445.2 L123.0,445.2 L123.0,444.7 L122.0,444.7 L122.0,444.7 L121.0,444.7 L121.0,442.7 L120.0,442.7 L120.0,444.7 L119.0,444.7 L119.0,444.3 L118.0,444.3 L118.0,445.9 L117.0,445.9 L117.0,448.7 L116.0,448.7 L116.0,448.5 L115.0,448.5 L115.0,447.8 L114.0,447.8 L114.0,447.6 L113.0,447.6 L113.0,446.3 L112.0,446.3 L112.0,448.4 L111.0,448.4 L111.0,446.4 L110.0,446.4 L110.0,448.6 L109.0,448.6 L109.0,446.1 L108.0,446.1 L108.0,448.2 L107.0,448.2 L107.0,452.7 L106.0,452.7 L106.0,447.4 L105.0,447.4 L105.0,445.0 L104.0,445.0 L104.0,448.5 L103.0,448.5Z" fill="#234a66"/><path d="M283.0,421.8 L284.0,421.8 L284.0,420.9 L285.0,420.9 L285.0,425.7 L286.0,425.7 L286.0,421.3 L287.0,421.3 L287.0,421.5 L288.0,421.5 L288.0,424.4 L289.0,424.4 L289.0,421.8 L290.0,421.8 L290.0,419.4 L291.0,419.4 L291.0,421.8 L292.0,421.8 L292.0,419.6 L293.0,419.6 L293.0,421.7 L294.0,421.7 L294.0,419.7 L295.0,419.7 L295.0,424.6 L296.0,424.6 L296.0,419.1 L297.0,419.1 L297.0,422.1 L298.0,422.1 L298.0,424.1 L299.0,424.1 L299.0,419.0 L300.0,419.0 L300.0,421.3 L301.0,421.3 L301.0,419.0 L302.0,419.0 L302.0,419.7 L303.0,419.7 L303.0,422.3 L304.0,422.3 L304.0,422.3 L305.0,422.3 L305.0,420.3 L306.0,420.3 L306.0,417.9 L307.0,417.9 L307.0,423.4 L308.0,423.4 L308.0,423.1 L309.0,423.1 L309.0,420.6 L310.0,420.6 L310.0,421.5 L311.0,421.5 L311.0,418.3 L312.0,418.3 L312.0,422.1 L313.0,422.1 L313.0,421.5 L314.0,421.5 L314.0,423.1 L315.0,423.1 L315.0,424.2 L316.0,424.2 L316.0,422.8 L317.0,422.8 L317.0,422.4 L318.0,422.4 L318.0,417.8 L319.0,417.8 L319.0,417.8 L320.0,417.8 L320.0,420.9 L321.0,420.9 L321.0,422.7 L322.0,422.7 L322.0,422.0 L323.0,422.0 L323.0,422.1 L324.0,422.1 L324.0,420.9 L325.0,420.9 L325.0,421.6 L326.0,421.6 L326.0,422.1 L327.0,422.1 L327.0,422.5 L328.0,422.5 L328.0,424.0 L329.0,424.0 L329.0,423.3 L330.0,423.3 L330.0,420.5 L331.0,420.5 L331.0,421.0 L332.0,421.0 L332.0,421.9 L333.0,421.9 L333.0,420.3 L334.0,420.3 L334.0,423.9 L335.0,423.9 L335.0,419.4 L336.0,419.4 L336.0,421.9 L337.0,421.9 L337.0,419.7 L338.0,419.7 L338.0,418.4 L339.0,418.4 L339.0,420.5 L340.0,420.5 L340.0,419.4 L341.0,419.4 L341.0,421.0 L342.0,421.0 L342.0,418.0 L343.0,418.0 L343.0,421.6 L344.0,421.6 L344.0,420.3 L345.0,420.3 L345.0,420.9 L346.0,420.9 L346.0,421.5 L347.0,421.5 L347.0,422.1 L348.0,422.1 L348.0,421.6 L349.0,421.6 L349.0,418.9 L350.0,418.9 L350.0,418.9 L351.0,418.9 L351.0,422.1 L352.0,422.1 L352.0,419.4 L353.0,419.4 L353.0,416.4 L354.0,416.4 L354.0,422.4 L355.0,422.4 L355.0,421.1 L356.0,421.1 L356.0,421.8 L357.0,421.8 L357.0,417.2 L358.0,417.2 L358.0,419.2 L359.0,419.2 L359.0,418.5 L360.0,418.5 L360.0,417.7 L361.0,417.7 L361.0,419.5 L362.0,419.5 L362.0,418.6 L363.0,418.6 L363.0,424.5 L364.0,424.5 L364.0,421.2 L365.0,421.2 L365.0,423.2 L366.0,423.2 L366.0,421.7 L367.0,421.7 L367.0,420.6 L368.0,420.6 L368.0,416.0 L369.0,416.0 L369.0,417.6 L370.0,417.6 L370.0,420.8 L371.0,420.8 L371.0,419.9 L372.0,419.9 L372.0,421.2 L373.0,421.2 L373.0,422.7 L374.0,422.7 L374.0,420.6 L375.0,420.6 L375.0,421.2 L376.0,421.2 L376.0,420.3 L377.0,420.3 L377.0,421.3 L378.0,421.3 L378.0,422.7 L379.0,422.7 L379.0,423.0 L380.0,423.0 L380.0,417.5 L381.0,417.5 L381.0,417.8 L382.0,417.8 L382.0,419.9 L383.0,419.9 L383.0,417.4 L384.0,417.4 L384.0,420.2 L385.0,420.2 L385.0,417.4 L386.0,417.4 L386.0,420.0 L387.0,420.0 L387.0,419.9 L388.0,419.9 L388.0,418.6 L389.0,418.6 L389.0,417.9 L390.0,417.9 L390.0,418.6 L391.0,418.6 L391.0,418.6 L392.0,418.6 L392.0,420.1 L393.0,420.1 L393.0,419.3 L394.0,419.3 L394.0,419.6 L395.0,419.6 L395.0,415.5 L396.0,415.5 L396.0,420.9 L397.0,420.9 L397.0,421.5 L398.0,421.5 L398.0,422.1 L399.0,422.1 L399.0,423.6 L400.0,423.6 L400.0,420.5 L401.0,420.5 L401.0,417.6 L402.0,417.6 L402.0,423.2 L403.0,423.2 L403.0,422.2 L404.0,422.2 L404.0,421.9 L405.0,421.9 L405.0,420.1 L406.0,420.1 L406.0,422.8 L407.0,422.8 L407.0,420.1 L408.0,420.1 L408.0,422.5 L409.0,422.5 L409.0,420.8 L410.0,420.8 L410.0,418.9 L411.0,418.9 L411.0,420.2 L412.0,420.2 L412.0,420.3 L413.0,420.3 L413.0,420.1 L414.0,420.1 L414.0,421.3 L415.0,421.3 L415.0,416.0 L416.0,416.0 L416.0,423.3 L417.0,423.3 L417.0,424.0 L418.0,424.0 L418.0,423.5 L419.0,423.5 L419.0,417.8 L420.0,417.8 L420.0,418.3 L421.0,418.3 L421.0,416.4 L422.0,416.4 L422.0,418.9 L423.0,418.9 L423.0,416.6 L424.0,416.6 L424.0,422.1 L425.0,422.1 L425.0,420.3 L426.0,420.3 L426.0,419.2 L427.0,419.2 L427.0,416.2 L428.0,416.2 L428.0,417.0 L429.0,417.0 L429.0,418.7 L430.0,418.7 L430.0,419.6 L431.0,419.6 L431.0,418.9 L432.0,418.9 L432.0,416.9 L433.0,416.9 L433.0,419.4 L434.0,419.4 L434.0,419.2 L435.0,419.2 L435.0,417.6 L436.0,417.6 L436.0,416.2 L437.0,416.2 L437.0,417.6 L438.0,417.6 L438.0,417.8 L439.0,417.8 L439.0,417.6 L440.0,417.6 L440.0,417.6 L441.0,417.6 L441.0,418.7 L442.0,418.7 L442.0,420.5 L443.0,420.5 L443.0,417.7 L444.0,417.7 L444.0,421.8 L445.0,421.8 L445.0,420.8 L446.0,420.8 L446.0,419.0 L447.0,419.0 L447.0,419.9 L448.0,419.9 L448.0,420.3 L449.0,420.3 L449.0,417.9 L450.0,417.9 L450.0,419.4 L451.0,419.4 L451.0,419.0 L452.0,419.0 L452.0,419.8 L453.0,419.8 L453.0,418.3 L454.0,418.3 L454.0,421.7 L455.0,421.7 L455.0,417.1 L456.0,417.1 L456.0,422.0 L457.0,422.0 L457.0,420.7 L458.0,420.7 L458.0,422.3 L459.0,422.3 L459.0,419.4 L460.0,419.4 L460.0,418.8 L461.0,418.8 L461.0,417.5 L462.0,417.5 L462.0,418.3 L463.0,418.3 L463.0,421.6 L464.0,421.6 L464.0,419.2 L465.0,419.2 L465.0,419.0 L466.0,419.0 L466.0,422.4 L467.0,422.4 L467.0,418.7 L468.0,418.7 L468.0,423.3 L469.0,423.3 L469.0,419.3 L470.0,419.3 L470.0,422.0 L471.0,422.0 L471.0,420.6 L472.0,420.6 L472.0,419.0 L473.0,419.0 L473.0,419.8 L474.0,419.8 L474.0,418.8 L475.0,418.8 L475.0,417.0 L476.0,417.0 L476.0,418.1 L477.0,418.1 L477.0,416.5 L478.0,416.5 L478.0,417.2 L479.0,417.2 L479.0,418.0 L480.0,418.0 L480.0,420.3 L481.0,420.3 L481.0,418.2 L482.0,418.2 L482.0,418.6 L483.0,418.6 L483.0,415.7 L484.0,415.7 L484.0,418.8 L485.0,418.8 L485.0,418.3 L486.0,418.3 L486.0,417.1 L487.0,417.1 L487.0,421.3 L488.0,421.3 L488.0,419.7 L489.0,419.7 L489.0,419.9 L490.0,419.9 L490.0,422.5 L491.0,422.5 L491.0,422.9 L492.0,422.9 L492.0,421.5 L493.0,421.5 L493.0,422.5 L494.0,422.5 L494.0,419.8 L495.0,419.8 L495.0,420.4 L496.0,420.4 L496.0,417.8 L497.0,417.8 L497.0,419.8 L498.0,419.8 L498.0,417.7 L499.0,417.7 L499.0,416.9 L500.0,416.9 L500.0,421.4 L501.0,421.4 L501.0,422.2 L502.0,422.2 L502.0,419.4 L503.0,419.4 L503.0,421.8 L504.0,421.8 L504.0,418.3 L505.0,418.3 L505.0,422.0 L506.0,422.0 L506.0,420.6 L507.0,420.6 L507.0,419.0 L508.0,419.0 L508.0,419.2 L509.0,419.2 L509.0,421.6 L510.0,421.6 L510.0,417.2 L511.0,417.2 L511.0,422.8 L512.0,422.8 L512.0,423.1 L513.0,423.1 L513.0,418.2 L514.0,418.2 L514.0,417.6 L515.0,417.6 L515.0,420.7 L516.0,420.7 L516.0,418.2 L517.0,418.2 L517.0,421.1 L518.0,421.1 L518.0,420.2 L519.0,420.2 L519.0,417.7 L520.0,417.7 L520.0,416.4 L521.0,416.4 L521.0,415.7 L522.0,415.7 L522.0,417.2 L523.0,417.2 L523.0,420.5 L524.0,420.5 L524.0,419.4 L525.0,419.4 L525.0,416.8 L526.0,416.8 L526.0,418.5 L527.0,418.5 L527.0,417.3 L528.0,417.3 L528.0,416.8 L529.0,416.8 L529.0,418.5 L530.0,418.5 L530.0,416.2 L531.0,416.2 L531.0,420.3 L532.0,420.3 L532.0,420.4 L533.0,420.4 L533.0,421.0 L534.0,421.0 L534.0,418.6 L535.0,418.6 L535.0,417.6 L536.0,417.6 L536.0,419.5 L537.0,419.5 L537.0,420.4 L538.0,420.4 L538.0,415.9 L539.0,415.9 L539.0,420.6 L540.0,420.6 L540.0,418.3 L541.0,418.3 L541.0,418.8 L542.0,418.8 L542.0,421.5 L543.0,421.5 L543.0,418.1 L544.0,418.1 L544.0,417.2 L545.0,417.2 L545.0,419.4 L546.0,419.4 L546.0,417.5 L547.0,417.5 L547.0,417.8 L548.0,417.8 L548.0,423.9 L549.0,423.9 L549.0,420.6 L550.0,420.6 L550.0,422.7 L551.0,422.7 L551.0,423.6 L552.0,423.6 L552.0,422.4 L553.0,422.4 L553.0,419.3 L554.0,419.3 L554.0,419.8 L555.0,419.8 L555.0,422.6 L556.0,422.6 L556.0,420.6 L557.0,420.6 L557.0,418.6 L558.0,418.6 L558.0,421.9 L559.0,421.9 L559.0,418.9 L560.0,418.9 L560.0,417.1 L561.0,417.1 L561.0,420.0 L562.0,420.0 L562.0,422.5 L563.0,422.5 L563.0,419.6 L564.0,419.6 L564.0,419.3 L565.0,419.3 L565.0,417.5 L566.0,417.5 L566.0,420.8 L567.0,420.8 L567.0,418.1 L568.0,418.1 L568.0,416.3 L569.0,416.3 L569.0,419.1 L570.0,419.1 L570.0,417.9 L571.0,417.9 L571.0,422.4 L572.0,422.4 L572.0,421.5 L573.0,421.5 L573.0,419.0 L574.0,419.0 L574.0,421.7 L575.0,421.7 L575.0,422.5 L576.0,422.5 L576.0,420.1 L577.0,420.1 L577.0,418.3 L578.0,418.3 L578.0,422.0 L579.0,422.0 L579.0,417.7 L580.0,417.7 L580.0,422.1 L581.0,422.1 L581.0,422.3 L582.0,422.3 L582.0,421.6 L583.0,421.6 L583.0,419.9 L584.0,419.9 L584.0,418.0 L585.0,418.0 L585.0,422.7 L586.0,422.7 L586.0,422.9 L587.0,422.9 L587.0,422.3 L588.0,422.3 L588.0,420.4 L589.0,420.4 L589.0,421.2 L590.0,421.2 L590.0,417.8 L591.0,417.8 L591.0,421.7 L592.0,421.7 L592.0,418.1 L593.0,418.1 L593.0,417.4 L594.0,417.4 L594.0,420.1 L595.0,420.1 L595.0,420.4 L596.0,420.4 L596.0,419.2 L597.0,419.2 L597.0,421.0 L598.0,421.0 L598.0,417.5 L599.0,417.5 L599.0,417.5 L600.0,417.5 L600.0,422.0 L601.0,422.0 L601.0,421.7 L602.0,421.7 L602.0,415.8 L603.0,415.8 L603.0,417.7 L604.0,417.7 L604.0,417.9 L605.0,417.9 L605.0,418.2 L606.0,418.2 L606.0,421.2 L607.0,421.2 L607.0,418.6 L608.0,418.6 L608.0,416.3 L609.0,416.3 L609.0,417.2 L610.0,417.2 L610.0,421.2 L611.0,421.2 L611.0,421.0 L612.0,421.0 L612.0,421.8 L613.0,421.8 L613.0,415.6 L614.0,415.6 L614.0,420.9 L615.0,420.9 L615.0,416.0 L616.0,416.0 L616.0,421.0 L617.0,421.0 L617.0,422.4 L618.0,422.4 L618.0,422.6 L619.0,422.6 L619.0,419.9 L620.0,419.9 L620.0,420.7 L621.0,420.7 L621.0,421.7 L622.0,421.7 L622.0,417.2 L623.0,417.2 L623.0,417.5 L624.0,417.5 L624.0,416.7 L625.0,416.7 L625.0,418.4 L626.0,418.4 L626.0,419.4 L627.0,419.4 L627.0,417.2 L628.0,417.2 L628.0,416.3 L629.0,416.3 L629.0,417.2 L630.0,417.2 L630.0,419.1 L631.0,419.1 L631.0,417.2 L632.0,417.2 L632.0,416.8 L633.0,416.8 L633.0,416.4 L634.0,416.4 L634.0,420.0 L635.0,420.0 L635.0,419.0 L636.0,419.0 L636.0,417.0 L637.0,417.0 L637.0,417.9 L638.0,417.9 L638.0,416.1 L639.0,416.1 L639.0,417.3 L640.0,417.3 L640.0,416.6 L641.0,416.6 L641.0,420.8 L642.0,420.8 L642.0,422.2 L643.0,422.2 L643.0,422.7 L644.0,422.7 L644.0,418.0 L645.0,418.0 L645.0,419.3 L646.0,419.3 L646.0,418.0 L647.0,418.0 L647.0,418.5 L648.0,418.5 L648.0,421.8 L649.0,421.8 L649.0,419.8 L650.0,419.8 L650.0,423.4 L651.0,423.4 L651.0,421.5 L652.0,421.5 L652.0,421.0 L653.0,421.0 L653.0,418.3 L654.0,418.3 L654.0,421.7 L655.0,421.7 L655.0,418.0 L656.0,418.0 L656.0,418.9 L657.0,418.9 L657.0,420.2 L658.0,420.2 L658.0,418.7 L659.0,418.7 L659.0,421.2 L660.0,421.2 L660.0,421.3 L661.0,421.3 L661.0,419.3 L662.0,419.3 L662.0,421.4 L663.0,421.4 L663.0,416.7 L664.0,416.7 L664.0,418.3 L665.0,418.3 L665.0,422.5 L666.0,422.5 L666.0,416.2 L667.0,416.2 L667.0,420.5 L668.0,420.5 L668.0,423.4 L669.0,423.4 L669.0,418.6 L670.0,418.6 L670.0,421.4 L671.0,421.4 L671.0,417.2 L672.0,417.2 L672.0,421.6 L673.0,421.6 L673.0,418.3 L674.0,418.3 L674.0,420.4 L675.0,420.4 L675.0,418.9 L676.0,418.9 L676.0,422.1 L677.0,422.1 L677.0,420.1 L678.0,420.1 L678.0,420.4 L679.0,420.4 L679.0,417.5 L680.0,417.5 L680.0,417.0 L681.0,417.0 L681.0,418.9 L682.0,418.9 L682.0,422.1 L683.0,422.1 L683.0,422.2 L684.0,422.2 L684.0,423.4 L685.0,423.4 L685.0,421.5 L686.0,421.5 L686.0,424.6 L687.0,424.6 L687.0,422.9 L688.0,422.9 L688.0,421.4 L689.0,421.4 L689.0,424.1 L690.0,424.1 L690.0,423.5 L691.0,423.5 L691.0,418.6 L692.0,418.6 L692.0,421.1 L693.0,421.1 L693.0,421.8 L694.0,421.8 L694.0,420.9 L695.0,420.9 L695.0,419.0 L696.0,419.0 L696.0,418.3 L697.0,418.3 L697.0,420.3 L698.0,420.3 L698.0,421.8 L699.0,421.8 L699.0,416.9 L700.0,416.9 L700.0,421.5 L701.0,421.5 L701.0,420.3 L702.0,420.3 L702.0,416.4 L703.0,416.4 L703.0,421.5 L704.0,421.5 L704.0,422.9 L705.0,422.9 L705.0,419.7 L706.0,419.7 L706.0,420.3 L707.0,420.3 L707.0,422.9 L708.0,422.9 L708.0,418.7 L709.0,418.7 L709.0,420.3 L710.0,420.3 L710.0,419.7 L711.0,419.7 L711.0,421.4 L712.0,421.4 L712.0,422.0 L713.0,422.0 L713.0,416.5 L714.0,416.5 L714.0,421.1 L715.0,421.1 L715.0,420.0 L716.0,420.0 L716.0,423.1 L717.0,423.1 L717.0,420.4 L718.0,420.4 L718.0,421.2 L719.0,421.2 L719.0,424.9 L720.0,424.9 L720.0,419.9 L721.0,419.9 L721.0,418.2 L722.0,418.2 L722.0,423.6 L723.0,423.6 L723.0,420.7 L724.0,420.7 L724.0,420.7 L725.0,420.7 L725.0,423.3 L726.0,423.3 L726.0,424.0 L727.0,424.0 L727.0,423.4 L728.0,423.4 L728.0,423.0 L729.0,423.0 L729.0,420.6 L730.0,420.6 L730.0,419.9 L731.0,419.9 L731.0,422.7 L732.0,422.7 L732.0,419.0 L733.0,419.0 L733.0,422.5 L734.0,422.5 L734.0,423.5 L735.0,423.5 L735.0,422.0 L736.0,422.0 L736.0,422.5 L737.0,422.5 L737.0,422.8 L738.0,422.8 L738.0,420.9 L739.0,420.9 L739.0,424.0 L740.0,424.0 L740.0,427.1 L741.0,427.1 L741.0,427.4 L742.0,427.4 L742.0,428.8 L743.0,428.8 L743.0,428.7 L744.0,428.7 L744.0,429.5 L745.0,429.5 L745.0,428.5 L746.0,428.5 L746.0,429.5 L747.0,429.5 L747.0,428.9 L748.0,428.9 L748.0,428.8 L749.0,428.8 L749.0,428.8 L750.0,428.8 L750.0,428.2 L751.0,428.2 L751.0,429.1 L752.0,429.1 L752.0,429.9 L753.0,429.9 L753.0,429.6 L754.0,429.6 L754.0,426.5 L755.0,426.5 L755.0,438.1 L754.0,438.1 L754.0,437.8 L753.0,437.8 L753.0,438.1 L752.0,438.1 L752.0,438.4 L751.0,438.4 L751.0,438.3 L750.0,438.3 L750.0,437.8 L749.0,437.8 L749.0,438.3 L748.0,438.3 L748.0,438.4 L747.0,438.4 L747.0,439.9 L746.0,439.9 L746.0,439.1 L745.0,439.1 L745.0,438.2 L744.0,438.2 L744.0,438.7 L743.0,438.7 L743.0,438.9 L742.0,438.9 L742.0,438.2 L741.0,438.2 L741.0,441.5 L740.0,441.5 L740.0,439.3 L739.0,439.3 L739.0,440.3 L738.0,440.3 L738.0,439.5 L737.0,439.5 L737.0,440.3 L736.0,440.3 L736.0,445.5 L735.0,445.5 L735.0,440.3 L734.0,440.3 L734.0,442.8 L733.0,442.8 L733.0,439.4 L732.0,439.4 L732.0,440.9 L731.0,440.9 L731.0,440.6 L730.0,440.6 L730.0,440.9 L729.0,440.9 L729.0,441.2 L728.0,441.2 L728.0,441.7 L727.0,441.7 L727.0,443.1 L726.0,443.1 L726.0,441.7 L725.0,441.7 L725.0,448.0 L724.0,448.0 L724.0,441.8 L723.0,441.8 L723.0,442.2 L722.0,442.2 L722.0,441.5 L721.0,441.5 L721.0,440.1 L720.0,440.1 L720.0,440.8 L719.0,440.8 L719.0,440.8 L718.0,440.8 L718.0,441.8 L717.0,441.8 L717.0,442.1 L716.0,442.1 L716.0,443.4 L715.0,443.4 L715.0,443.7 L714.0,443.7 L714.0,447.9 L713.0,447.9 L713.0,448.9 L712.0,448.9 L712.0,446.9 L711.0,446.9 L711.0,442.4 L710.0,442.4 L710.0,441.2 L709.0,441.2 L709.0,440.5 L708.0,440.5 L708.0,441.0 L707.0,441.0 L707.0,440.8 L706.0,440.8 L706.0,443.2 L705.0,443.2 L705.0,442.0 L704.0,442.0 L704.0,444.6 L703.0,444.6 L703.0,441.0 L702.0,441.0 L702.0,447.3 L701.0,447.3 L701.0,444.9 L700.0,444.9 L700.0,442.9 L699.0,442.9 L699.0,442.0 L698.0,442.0 L698.0,443.1 L697.0,443.1 L697.0,443.4 L696.0,443.4 L696.0,443.3 L695.0,443.3 L695.0,440.9 L694.0,440.9 L694.0,441.3 L693.0,441.3 L693.0,441.2 L692.0,441.2 L692.0,442.2 L691.0,442.2 L691.0,441.1 L690.0,441.1 L690.0,442.9 L689.0,442.9 L689.0,441.2 L688.0,441.2 L688.0,441.9 L687.0,441.9 L687.0,442.4 L686.0,442.4 L686.0,442.8 L685.0,442.8 L685.0,445.6 L684.0,445.6 L684.0,442.9 L683.0,442.9 L683.0,442.6 L682.0,442.6 L682.0,441.3 L681.0,441.3 L681.0,448.7 L680.0,448.7 L680.0,443.2 L679.0,443.2 L679.0,443.3 L678.0,443.3 L678.0,445.2 L677.0,445.2 L677.0,443.7 L676.0,443.7 L676.0,441.7 L675.0,441.7 L675.0,446.6 L674.0,446.6 L674.0,441.9 L673.0,441.9 L673.0,441.9 L672.0,441.9 L672.0,443.6 L671.0,443.6 L671.0,442.8 L670.0,442.8 L670.0,444.7 L669.0,444.7 L669.0,444.5 L668.0,444.5 L668.0,444.6 L667.0,444.6 L667.0,444.1 L666.0,444.1 L666.0,443.7 L665.0,443.7 L665.0,443.1 L664.0,443.1 L664.0,443.1 L663.0,443.1 L663.0,440.3 L662.0,440.3 L662.0,436.8 L661.0,436.8 L661.0,437.2 L660.0,437.2 L660.0,438.8 L659.0,438.8 L659.0,437.3 L658.0,437.3 L658.0,437.8 L657.0,437.8 L657.0,437.9 L656.0,437.9 L656.0,437.7 L655.0,437.7 L655.0,438.6 L654.0,438.6 L654.0,437.0 L653.0,437.0 L653.0,438.4 L652.0,438.4 L652.0,437.3 L651.0,437.3 L651.0,438.9 L650.0,438.9 L650.0,437.2 L649.0,437.2 L649.0,437.3 L648.0,437.3 L648.0,436.8 L647.0,436.8 L647.0,437.5 L646.0,437.5 L646.0,437.5 L645.0,437.5 L645.0,437.3 L644.0,437.3 L644.0,439.4 L643.0,439.4 L643.0,436.8 L642.0,436.8 L642.0,437.5 L641.0,437.5 L641.0,437.3 L640.0,437.3 L640.0,438.2 L639.0,438.2 L639.0,439.6 L638.0,439.6 L638.0,442.1 L637.0,442.1 L637.0,442.2 L636.0,442.2 L636.0,443.1 L635.0,443.1 L635.0,441.9 L634.0,441.9 L634.0,441.9 L633.0,441.9 L633.0,443.5 L632.0,443.5 L632.0,443.7 L631.0,443.7 L631.0,444.1 L630.0,444.1 L630.0,443.4 L629.0,443.4 L629.0,443.0 L628.0,443.0 L628.0,441.6 L627.0,441.6 L627.0,448.3 L626.0,448.3 L626.0,441.5 L625.0,441.5 L625.0,441.2 L624.0,441.2 L624.0,447.5 L623.0,447.5 L623.0,446.5 L622.0,446.5 L622.0,441.3 L621.0,441.3 L621.0,443.5 L620.0,443.5 L620.0,442.7 L619.0,442.7 L619.0,443.1 L618.0,443.1 L618.0,442.1 L617.0,442.1 L617.0,444.7 L616.0,444.7 L616.0,442.7 L615.0,442.7 L615.0,443.1 L614.0,443.1 L614.0,446.8 L613.0,446.8 L613.0,442.7 L612.0,442.7 L612.0,444.6 L611.0,444.6 L611.0,441.6 L610.0,441.6 L610.0,445.5 L609.0,445.5 L609.0,442.8 L608.0,442.8 L608.0,441.6 L607.0,441.6 L607.0,441.7 L606.0,441.7 L606.0,443.0 L605.0,443.0 L605.0,443.2 L604.0,443.2 L604.0,442.0 L603.0,442.0 L603.0,442.6 L602.0,442.6 L602.0,447.3 L601.0,447.3 L601.0,446.7 L600.0,446.7 L600.0,443.6 L599.0,443.6 L599.0,442.1 L598.0,442.1 L598.0,444.7 L597.0,444.7 L597.0,444.9 L596.0,444.9 L596.0,444.7 L595.0,444.7 L595.0,443.1 L594.0,443.1 L594.0,444.7 L593.0,444.7 L593.0,442.7 L592.0,442.7 L592.0,442.7 L591.0,442.7 L591.0,444.2 L590.0,444.2 L590.0,442.1 L589.0,442.1 L589.0,442.5 L588.0,442.5 L588.0,446.1 L587.0,446.1 L587.0,447.5 L586.0,447.5 L586.0,443.8 L585.0,443.8 L585.0,447.4 L584.0,447.4 L584.0,442.1 L583.0,442.1 L583.0,448.4 L582.0,448.4 L582.0,448.3 L581.0,448.3 L581.0,444.2 L580.0,444.2 L580.0,444.0 L579.0,444.0 L579.0,444.0 L578.0,444.0 L578.0,444.0 L577.0,444.0 L577.0,444.2 L576.0,444.2 L576.0,448.3 L575.0,448.3 L575.0,448.6 L574.0,448.6 L574.0,444.1 L573.0,444.1 L573.0,443.5 L572.0,443.5 L572.0,443.9 L571.0,443.9 L571.0,442.3 L570.0,442.3 L570.0,442.8 L569.0,442.8 L569.0,446.8 L568.0,446.8 L568.0,443.0 L567.0,443.0 L567.0,442.7 L566.0,442.7 L566.0,444.1 L565.0,444.1 L565.0,442.5 L564.0,442.5 L564.0,447.4 L563.0,447.4 L563.0,446.4 L562.0,446.4 L562.0,440.9 L561.0,440.9 L561.0,442.4 L560.0,442.4 L560.0,443.4 L559.0,443.4 L559.0,443.9 L558.0,443.9 L558.0,445.4 L557.0,445.4 L557.0,441.6 L556.0,441.6 L556.0,442.7 L555.0,442.7 L555.0,443.3 L554.0,443.3 L554.0,444.2 L553.0,444.2 L553.0,442.3 L552.0,442.3 L552.0,442.6 L551.0,442.6 L551.0,441.4 L550.0,441.4 L550.0,441.2 L549.0,441.2 L549.0,442.9 L548.0,442.9 L548.0,446.9 L547.0,446.9 L547.0,445.0 L546.0,445.0 L546.0,441.3 L545.0,441.3 L545.0,443.2 L544.0,443.2 L544.0,440.6 L543.0,440.6 L543.0,442.5 L542.0,442.5 L542.0,443.9 L541.0,443.9 L541.0,443.4 L540.0,443.4 L540.0,441.4 L539.0,441.4 L539.0,441.1 L538.0,441.1 L538.0,443.6 L537.0,443.6 L537.0,441.6 L536.0,441.6 L536.0,442.5 L535.0,442.5 L535.0,443.1 L534.0,443.1 L534.0,442.0 L533.0,442.0 L533.0,441.3 L532.0,441.3 L532.0,441.0 L531.0,441.0 L531.0,443.6 L530.0,443.6 L530.0,448.9 L529.0,448.9 L529.0,442.4 L528.0,442.4 L528.0,445.5 L527.0,445.5 L527.0,443.3 L526.0,443.3 L526.0,443.4 L525.0,443.4 L525.0,442.1 L524.0,442.1 L524.0,444.1 L523.0,444.1 L523.0,442.6 L522.0,442.6 L522.0,443.3 L521.0,443.3 L521.0,443.3 L520.0,443.3 L520.0,446.9 L519.0,446.9 L519.0,442.4 L518.0,442.4 L518.0,442.0 L517.0,442.0 L517.0,443.5 L516.0,443.5 L516.0,442.9 L515.0,442.9 L515.0,440.9 L514.0,440.9 L514.0,442.6 L513.0,442.6 L513.0,442.3 L512.0,442.3 L512.0,441.3 L511.0,441.3 L511.0,443.6 L510.0,443.6 L510.0,441.2 L509.0,441.2 L509.0,441.7 L508.0,441.7 L508.0,443.3 L507.0,443.3 L507.0,446.4 L506.0,446.4 L506.0,442.8 L505.0,442.8 L505.0,443.0 L504.0,443.0 L504.0,441.4 L503.0,441.4 L503.0,445.7 L502.0,445.7 L502.0,445.4 L501.0,445.4 L501.0,441.9 L500.0,441.9 L500.0,444.0 L499.0,444.0 L499.0,443.1 L498.0,443.1 L498.0,443.1 L497.0,443.1 L497.0,444.6 L496.0,444.6 L496.0,446.9 L495.0,446.9 L495.0,448.4 L494.0,448.4 L494.0,442.7 L493.0,442.7 L493.0,445.2 L492.0,445.2 L492.0,449.6 L491.0,449.6 L491.0,443.2 L490.0,443.2 L490.0,445.3 L489.0,445.3 L489.0,442.5 L488.0,442.5 L488.0,447.7 L487.0,447.7 L487.0,442.6 L486.0,442.6 L486.0,444.5 L485.0,444.5 L485.0,444.1 L484.0,444.1 L484.0,444.9 L483.0,444.9 L483.0,443.8 L482.0,443.8 L482.0,443.1 L481.0,443.1 L481.0,442.9 L480.0,442.9 L480.0,441.4 L479.0,441.4 L479.0,443.9 L478.0,443.9 L478.0,442.5 L477.0,442.5 L477.0,446.1 L476.0,446.1 L476.0,443.2 L475.0,443.2 L475.0,442.2 L474.0,442.2 L474.0,442.4 L473.0,442.4 L473.0,443.0 L472.0,443.0 L472.0,443.2 L471.0,443.2 L471.0,442.5 L470.0,442.5 L470.0,443.2 L469.0,443.2 L469.0,443.6 L468.0,443.6 L468.0,445.6 L467.0,445.6 L467.0,444.1 L466.0,444.1 L466.0,446.2 L465.0,446.2 L465.0,443.7 L464.0,443.7 L464.0,444.4 L463.0,444.4 L463.0,444.1 L462.0,444.1 L462.0,444.0 L461.0,444.0 L461.0,442.8 L460.0,442.8 L460.0,444.9 L459.0,444.9 L459.0,441.2 L458.0,441.2 L458.0,443.3 L457.0,443.3 L457.0,444.8 L456.0,444.8 L456.0,443.5 L455.0,443.5 L455.0,449.9 L454.0,449.9 L454.0,443.0 L453.0,443.0 L453.0,449.9 L452.0,449.9 L452.0,442.8 L451.0,442.8 L451.0,441.9 L450.0,441.9 L450.0,443.6 L449.0,443.6 L449.0,442.5 L448.0,442.5 L448.0,442.0 L447.0,442.0 L447.0,443.7 L446.0,443.7 L446.0,445.4 L445.0,445.4 L445.0,443.4 L444.0,443.4 L444.0,442.0 L443.0,442.0 L443.0,442.7 L442.0,442.7 L442.0,442.3 L441.0,442.3 L441.0,443.9 L440.0,443.9 L440.0,446.7 L439.0,446.7 L439.0,442.3 L438.0,442.3 L438.0,441.9 L437.0,441.9 L437.0,441.6 L436.0,441.6 L436.0,441.9 L435.0,441.9 L435.0,442.7 L434.0,442.7 L434.0,444.6 L433.0,444.6 L433.0,448.9 L432.0,448.9 L432.0,445.8 L431.0,445.8 L431.0,442.8 L430.0,442.8 L430.0,443.4 L429.0,443.4 L429.0,443.3 L428.0,443.3 L428.0,443.8 L427.0,443.8 L427.0,445.7 L426.0,445.7 L426.0,443.4 L425.0,443.4 L425.0,444.1 L424.0,444.1 L424.0,444.4 L423.0,444.4 L423.0,442.5 L422.0,442.5 L422.0,445.0 L421.0,445.0 L421.0,450.2 L420.0,450.2 L420.0,442.3 L419.0,442.3 L419.0,443.7 L418.0,443.7 L418.0,442.8 L417.0,442.8 L417.0,448.9 L416.0,448.9 L416.0,444.7 L415.0,444.7 L415.0,447.8 L414.0,447.8 L414.0,447.1 L413.0,447.1 L413.0,449.3 L412.0,449.3 L412.0,450.2 L411.0,450.2 L411.0,444.4 L410.0,444.4 L410.0,442.9 L409.0,442.9 L409.0,442.5 L408.0,442.5 L408.0,444.6 L407.0,444.6 L407.0,445.0 L406.0,445.0 L406.0,448.7 L405.0,448.7 L405.0,444.8 L404.0,444.8 L404.0,442.9 L403.0,442.9 L403.0,444.4 L402.0,444.4 L402.0,447.1 L401.0,447.1 L401.0,442.7 L400.0,442.7 L400.0,442.8 L399.0,442.8 L399.0,446.0 L398.0,446.0 L398.0,442.7 L397.0,442.7 L397.0,445.6 L396.0,445.6 L396.0,442.8 L395.0,442.8 L395.0,450.4 L394.0,450.4 L394.0,445.0 L393.0,445.0 L393.0,449.9 L392.0,449.9 L392.0,444.9 L391.0,444.9 L391.0,444.7 L390.0,444.7 L390.0,446.3 L389.0,446.3 L389.0,444.7 L388.0,444.7 L388.0,445.0 L387.0,445.0 L387.0,443.9 L386.0,443.9 L386.0,444.0 L385.0,444.0 L385.0,444.4 L384.0,444.4 L384.0,445.8 L383.0,445.8 L383.0,446.9 L382.0,446.9 L382.0,443.4 L381.0,443.4 L381.0,443.7 L380.0,443.7 L380.0,445.8 L379.0,445.8 L379.0,447.0 L378.0,447.0 L378.0,446.3 L377.0,446.3 L377.0,445.5 L376.0,445.5 L376.0,444.1 L375.0,444.1 L375.0,445.5 L374.0,445.5 L374.0,446.2 L373.0,446.2 L373.0,444.2 L372.0,444.2 L372.0,446.2 L371.0,446.2 L371.0,443.5 L370.0,443.5 L370.0,444.3 L369.0,444.3 L369.0,445.5 L368.0,445.5 L368.0,445.7 L367.0,445.7 L367.0,445.9 L366.0,445.9 L366.0,443.5 L365.0,443.5 L365.0,444.7 L364.0,444.7 L364.0,444.8 L363.0,444.8 L363.0,444.8 L362.0,444.8 L362.0,445.8 L361.0,445.8 L361.0,447.6 L360.0,447.6 L360.0,446.5 L359.0,446.5 L359.0,450.7 L358.0,450.7 L358.0,444.0 L357.0,444.0 L357.0,442.7 L356.0,442.7 L356.0,442.0 L355.0,442.0 L355.0,450.0 L354.0,450.0 L354.0,444.1 L353.0,444.1 L353.0,443.4 L352.0,443.4 L352.0,442.8 L351.0,442.8 L351.0,445.3 L350.0,445.3 L350.0,447.2 L349.0,447.2 L349.0,445.0 L348.0,445.0 L348.0,444.8 L347.0,444.8 L347.0,445.9 L346.0,445.9 L346.0,442.9 L345.0,442.9 L345.0,444.9 L344.0,444.9 L344.0,442.3 L343.0,442.3 L343.0,445.2 L342.0,445.2 L342.0,443.9 L341.0,443.9 L341.0,450.5 L340.0,450.5 L340.0,450.9 L339.0,450.9 L339.0,442.4 L338.0,442.4 L338.0,442.5 L337.0,442.5 L337.0,443.9 L336.0,443.9 L336.0,447.3 L335.0,447.3 L335.0,443.0 L334.0,443.0 L334.0,445.4 L333.0,445.4 L333.0,443.4 L332.0,443.4 L332.0,443.4 L331.0,443.4 L331.0,445.4 L330.0,445.4 L330.0,445.6 L329.0,445.6 L329.0,445.7 L328.0,445.7 L328.0,444.3 L327.0,444.3 L327.0,443.8 L326.0,443.8 L326.0,444.2 L325.0,444.2 L325.0,445.8 L324.0,445.8 L324.0,444.2 L323.0,444.2 L323.0,445.0 L322.0,445.0 L322.0,446.1 L321.0,446.1 L321.0,444.7 L320.0,444.7 L320.0,446.4 L319.0,446.4 L319.0,446.9 L318.0,446.9 L318.0,442.4 L317.0,442.4 L317.0,443.7 L316.0,443.7 L316.0,443.3 L315.0,443.3 L315.0,449.7 L314.0,449.7 L314.0,448.6 L313.0,448.6 L313.0,446.4 L312.0,446.4 L312.0,446.4 L311.0,446.4 L311.0,450.6 L310.0,450.6 L310.0,446.2 L309.0,446.2 L309.0,443.7 L308.0,443.7 L308.0,443.7 L307.0,443.7 L307.0,446.5 L306.0,446.5 L306.0,448.6 L305.0,448.6 L305.0,445.5 L304.0,445.5 L304.0,445.8 L303.0,445.8 L303.0,443.9 L302.0,443.9 L302.0,450.1 L301.0,450.1 L301.0,443.5 L300.0,443.5 L300.0,443.8 L299.0,443.8 L299.0,448.9 L298.0,448.9 L298.0,443.7 L297.0,443.7 L297.0,447.6 L296.0,447.6 L296.0,443.1 L295.0,443.1 L295.0,443.2 L294.0,443.2 L294.0,447.4 L293.0,447.4 L293.0,450.1 L292.0,450.1 L292.0,443.6 L291.0,443.6 L291.0,443.3 L290.0,443.3 L290.0,445.9 L289.0,445.9 L289.0,446.6 L288.0,446.6 L288.0,444.9 L287.0,444.9 L287.0,443.7 L286.0,443.7 L286.0,444.1 L285.0,444.1 L285.0,445.9 L284.0,445.9 L284.0,444.8 L283.0,444.8Z" fill="#10f010"/><rect x="5" y="329.8" width="750" height="1.2" fill="#8a8a8a"/><rect x="5" y="331" width="750" height="2.2" fill="#f4f4f4"/><rect x="5" y="333.2" width="750" height="1" fill="#a0a0a0"/><path d="M103,122 L109.5,122 L103,128 Z" fill="#f4e430"/><path d="M283,122 L276.5,122 L283,128 Z" fill="#f4e430"/><path d="M103,537 L109.5,543 L103,543 Z" fill="#f4e430"/><path d="M283,537 L276.5,543 L283,543 Z" fill="#f4e430"/><rect x="51" y="113" width="1.2" height="431" fill="#444"/><rect x="44" y="128.8" width="8" height="1.2" fill="#222"/><rect x="48" y="136.3" width="4" height="1.2" fill="#222"/><rect x="44" y="143.7" width="8" height="1.2" fill="#222"/><rect x="48" y="151.0" width="4" height="1.2" fill="#222"/><rect x="44" y="158.2" width="8" height="1.2" fill="#222"/><rect x="48" y="165.1" width="4" height="1.2" fill="#222"/><rect x="44" y="171.9" width="8" height="1.2" fill="#222"/><rect x="48" y="179.1" width="4" height="1.2" fill="#222"/><rect x="44" y="186.2" width="8" height="1.2" fill="#222"/><rect x="48" y="193.5" width="4" height="1.2" fill="#222"/><rect x="44" y="200.8" width="8" height="1.2" fill="#222"/><rect x="48" y="208.3" width="4" height="1.2" fill="#222"/><rect x="44" y="215.7" width="8" height="1.2" fill="#222"/><rect x="48" y="222.5" width="4" height="1.2" fill="#222"/><rect x="44" y="229.3" width="8" height="1.2" fill="#222"/><rect x="48" y="236.0" width="4" height="1.2" fill="#222"/><rect x="44" y="242.7" width="8" height="1.2" fill="#222"/><rect x="48" y="249.9" width="4" height="1.2" fill="#222"/><rect x="44" y="257.0" width="8" height="1.2" fill="#222"/><rect x="48" y="264.4" width="4" height="1.2" fill="#222"/><rect x="44" y="271.7" width="8" height="1.2" fill="#222"/><rect x="48" y="278.9" width="4" height="1.2" fill="#222"/><rect x="44" y="286.2" width="8" height="1.2" fill="#222"/><rect x="48" y="293.0" width="4" height="1.2" fill="#222"/><rect x="44" y="299.9" width="8" height="1.2" fill="#222"/><rect x="48" y="307.2" width="4" height="1.2" fill="#222"/><rect x="44" y="314.6" width="8" height="1.2" fill="#222"/><rect x="48" y="321.6" width="4" height="1.2" fill="#222"/><rect x="44" y="328.7" width="8" height="1.2" fill="#222"/><text x="12.5" y="149.1" font-family="Liberation Serif" font-size="13" fill="#111">-1</text><text x="12.5" y="163.6" font-family="Liberation Serif" font-size="13" fill="#111">-2</text><text x="12.5" y="177.3" font-family="Liberation Serif" font-size="13" fill="#111">-4</text><text x="12.5" y="191.6" font-family="Liberation Serif" font-size="13" fill="#111">-7</text><text x="12.5" y="206.2" font-family="Liberation Serif" font-size="13" fill="#111">-10</text><text x="12.5" y="221.1" font-family="Liberation Serif" font-size="13" fill="#111">-16</text><text x="12.5" y="234.7" font-family="Liberation Serif" font-size="13" fill="#111">-90</text><text x="12.5" y="248.1" font-family="Liberation Serif" font-size="13" fill="#111">-16</text><text x="12.5" y="262.4" font-family="Liberation Serif" font-size="13" fill="#111">-10</text><text x="12.5" y="277.1" font-family="Liberation Serif" font-size="13" fill="#111">-7</text><text x="12.5" y="291.6" font-family="Liberation Serif" font-size="13" fill="#111">-4</text><text x="12.5" y="305.3" font-family="Liberation Serif" font-size="13" fill="#111">-2</text><text x="12.5" y="320.0" font-family="Liberation Serif" font-size="13" fill="#111">-1</text><rect x="44" y="334.5" width="8" height="1.2" fill="#222"/><rect x="48" y="341.9" width="4" height="1.2" fill="#222"/><rect x="44" y="349.2" width="8" height="1.2" fill="#222"/><rect x="48" y="356.5" width="4" height="1.2" fill="#222"/><rect x="44" y="363.7" width="8" height="1.2" fill="#222"/><rect x="48" y="370.5" width="4" height="1.2" fill="#222"/><rect x="44" y="377.4" width="8" height="1.2" fill="#222"/><rect x="48" y="384.5" width="4" height="1.2" fill="#222"/><rect x="44" y="391.7" width="8" height="1.2" fill="#222"/><rect x="48" y="399.1" width="4" height="1.2" fill="#222"/><rect x="44" y="406.5" width="8" height="1.2" fill="#222"/><rect x="48" y="413.6" width="4" height="1.2" fill="#222"/><rect x="44" y="420.6" width="8" height="1.2" fill="#222"/><rect x="48" y="427.4" width="4" height="1.2" fill="#222"/><rect x="44" y="434.1" width="8" height="1.2" fill="#222"/><rect x="48" y="440.7" width="4" height="1.2" fill="#222"/><rect x="44" y="447.3" width="8" height="1.2" fill="#222"/><rect x="48" y="454.8" width="4" height="1.2" fill="#222"/><rect x="44" y="462.3" width="8" height="1.2" fill="#222"/><rect x="48" y="469.6" width="4" height="1.2" fill="#222"/><rect x="44" y="476.9" width="8" height="1.2" fill="#222"/><rect x="48" y="484.3" width="4" height="1.2" fill="#222"/><rect x="44" y="491.7" width="8" height="1.2" fill="#222"/><rect x="48" y="498.8" width="4" height="1.2" fill="#222"/><rect x="44" y="505.8" width="8" height="1.2" fill="#222"/><rect x="48" y="512.9" width="4" height="1.2" fill="#222"/><rect x="44" y="519.9" width="8" height="1.2" fill="#222"/><rect x="48" y="527.2" width="4" height="1.2" fill="#222"/><rect x="44" y="534.5" width="8" height="1.2" fill="#222"/><text x="12.5" y="354.7" font-family="Liberation Serif" font-size="13" fill="#111">-1</text><text x="12.5" y="369.1" font-family="Liberation Serif" font-size="13" fill="#111">-2</text><text x="12.5" y="382.8" font-family="Liberation Serif" font-size="13" fill="#111">-4</text><text x="12.5" y="397.1" font-family="Liberation Serif" font-size="13" fill="#111">-7</text><text x="12.5" y="411.9" font-family="Liberation Serif" font-size="13" fill="#111">-10</text><text x="12.5" y="426.1" font-family="Liberation Serif" font-size="13" fill="#111">-16</text><text x="12.5" y="439.5" font-family="Liberation Serif" font-size="13" fill="#111">-90</text><text x="12.5" y="452.7" font-family="Liberation Serif" font-size="13" fill="#111">-16</text><text x="12.5" y="467.7" font-family="Liberation Serif" font-size="13" fill="#111">-10</text><text x="12.5" y="482.3" font-family="Liberation Serif" font-size="13" fill="#111">-7</text><text x="12.5" y="497.1" font-family="Liberation Serif" font-size="13" fill="#111">-4</text><text x="12.5" y="511.2" font-family="Liberation Serif" font-size="13" fill="#111">-2</text><text x="12.5" y="525.3" font-family="Liberation Serif" font-size="13" fill="#111">-1</text><rect x="754.8" y="112" width="1.2" height="456" fill="#555"/><rect x="52.4" y="544" width="1.4" height="8" fill="#222"/><rect x="61.9" y="545" width="1.3" height="3.5" fill="#222"/><rect x="71.5" y="545" width="1.3" height="3.5" fill="#222"/><rect x="81.1" y="545" width="1.3" height="3.5" fill="#222"/><rect x="90.6" y="545" width="1.3" height="3.5" fill="#222"/><rect x="100.2" y="545" width="1.3" height="3.5" fill="#222"/><rect x="109.7" y="545" width="1.3" height="3.5" fill="#222"/><rect x="119.2" y="545" width="1.3" height="3.5" fill="#222"/><rect x="128.8" y="545" width="1.3" height="3.5" fill="#222"/><rect x="138.3" y="545" width="1.3" height="3.5" fill="#222"/><rect x="147.9" y="544" width="1.4" height="8" fill="#222"/><rect x="157.5" y="545" width="1.3" height="3.5" fill="#222"/><rect x="167.0" y="545" width="1.3" height="3.5" fill="#222"/><rect x="176.6" y="545" width="1.3" height="3.5" fill="#222"/><rect x="186.1" y="545" width="1.3" height="3.5" fill="#222"/><rect x="195.7" y="545" width="1.3" height="3.5" fill="#222"/><rect x="205.2" y="545" width="1.3" height="3.5" fill="#222"/><rect x="214.8" y="545" width="1.3" height="3.5" fill="#222"/><rect x="224.3" y="545" width="1.3" height="3.5" fill="#222"/><rect x="233.8" y="545" width="1.3" height="3.5" fill="#222"/><rect x="243.4" y="544" width="1.4" height="8" fill="#222"/><rect x="253.0" y="545" width="1.3" height="3.5" fill="#222"/><rect x="262.5" y="545" width="1.3" height="3.5" fill="#222"/><rect x="272.1" y="545" width="1.3" height="3.5" fill="#222"/><rect x="281.6" y="545" width="1.3" height="3.5" fill="#222"/><rect x="291.2" y="545" width="1.3" height="3.5" fill="#222"/><rect x="300.8" y="545" width="1.3" height="3.5" fill="#222"/><rect x="310.3" y="545" width="1.3" height="3.5" fill="#222"/><rect x="319.9" y="545" width="1.3" height="3.5" fill="#222"/><rect x="329.4" y="545" width="1.3" height="3.5" fill="#222"/><rect x="339.0" y="544" width="1.4" height="8" fill="#222"/><rect x="348.6" y="545" width="1.3" height="3.5" fill="#222"/><rect x="358.1" y="545" width="1.3" height="3.5" fill="#222"/><rect x="367.7" y="545" width="1.3" height="3.5" fill="#222"/><rect x="377.3" y="545" width="1.3" height="3.5" fill="#222"/><rect x="386.9" y="545" width="1.3" height="3.5" fill="#222"/><rect x="396.4" y="545" width="1.3" height="3.5" fill="#222"/><rect x="406.0" y="545" width="1.3" height="3.5" fill="#222"/><rect x="415.6" y="545" width="1.3" height="3.5" fill="#222"/><rect x="425.1" y="545" width="1.3" height="3.5" fill="#222"/><rect x="434.7" y="544" width="1.4" height="8" fill="#222"/><rect x="444.2" y="545" width="1.3" height="3.5" fill="#222"/><rect x="453.8" y="545" width="1.3" height="3.5" fill="#222"/><rect x="463.3" y="545" width="1.3" height="3.5" fill="#222"/><rect x="472.9" y="545" width="1.3" height="3.5" fill="#222"/><rect x="482.4" y="545" width="1.3" height="3.5" fill="#222"/><rect x="492.0" y="545" width="1.3" height="3.5" fill="#222"/><rect x="501.5" y="545" width="1.3" height="3.5" fill="#222"/><rect x="511.1" y="545" width="1.3" height="3.5" fill="#222"/><rect x="520.6" y="545" width="1.3" height="3.5" fill="#222"/><rect x="530.2" y="544" width="1.4" height="8" fill="#222"/><rect x="539.7" y="545" width="1.3" height="3.5" fill="#222"/><rect x="549.1" y="545" width="1.3" height="3.5" fill="#222"/><rect x="558.6" y="545" width="1.3" height="3.5" fill="#222"/><rect x="568.1" y="545" width="1.3" height="3.5" fill="#222"/><rect x="577.5" y="545" width="1.3" height="3.5" fill="#222"/><rect x="587.0" y="545" width="1.3" height="3.5" fill="#222"/><rect x="596.5" y="545" width="1.3" height="3.5" fill="#222"/><rect x="606.0" y="545" width="1.3" height="3.5" fill="#222"/><rect x="615.4" y="545" width="1.3" height="3.5" fill="#222"/><rect x="624.9" y="544" width="1.4" height="8" fill="#222"/><rect x="634.4" y="545" width="1.3" height="3.5" fill="#222"/><rect x="643.9" y="545" width="1.3" height="3.5" fill="#222"/><rect x="653.3" y="545" width="1.3" height="3.5" fill="#222"/><rect x="662.8" y="545" width="1.3" height="3.5" fill="#222"/><rect x="672.3" y="545" width="1.3" height="3.5" fill="#222"/><rect x="681.8" y="545" width="1.3" height="3.5" fill="#222"/><rect x="691.3" y="545" width="1.3" height="3.5" fill="#222"/><rect x="700.7" y="545" width="1.3" height="3.5" fill="#222"/><rect x="710.2" y="545" width="1.3" height="3.5" fill="#222"/><rect x="719.7" y="544" width="1.4" height="8" fill="#222"/><rect x="729.2" y="545" width="1.3" height="3.5" fill="#222"/><rect x="738.7" y="545" width="1.3" height="3.5" fill="#222"/><rect x="748.3" y="545" width="1.3" height="3.5" fill="#222"/><text x="7.5" y="565" font-family="Liberation Sans" font-size="11" fill="#111">hms</text><text x="52.7" y="565.6" text-anchor="middle" font-family="Liberation Sans" font-size="12" letter-spacing="0.7" fill="#111">0:00.0</text><text x="148.2" y="565.6" text-anchor="middle" font-family="Liberation Sans" font-size="12" letter-spacing="0.7" fill="#111">0:01.0</text><text x="243.7" y="565.6" text-anchor="middle" font-family="Liberation Sans" font-size="12" letter-spacing="0.7" fill="#111">0:02.0</text><text x="339.3" y="565.6" text-anchor="middle" font-family="Liberation Sans" font-size="12" letter-spacing="0.7" fill="#111">0:03.0</text><text x="435.0" y="565.6" text-anchor="middle" font-family="Liberation Sans" font-size="12" letter-spacing="0.7" fill="#111">0:04.0</text><text x="530.5" y="565.6" text-anchor="middle" font-family="Liberation Sans" font-size="12" letter-spacing="0.7" fill="#111">0:05.0</text><text x="625.2" y="565.6" text-anchor="middle" font-family="Liberation Sans" font-size="12" letter-spacing="0.7" fill="#111">0:06.0</text><text x="720.0" y="565.6" text-anchor="middle" font-family="Liberation Sans" font-size="12" letter-spacing="0.7" fill="#111">0:07.0</text><defs><linearGradient id="mg" x1="0" y1="255" x2="0" y2="340" gradientUnits="userSpaceOnUse"><stop offset="0" stop-color="#5aa800"/><stop offset="1" stop-color="#00f800"/></linearGradient></defs><rect x="756" y="112" width="44" height="456" fill="#ededed"/><rect x="761" y="112.5" width="16" height="456" fill="#efefef"/><rect x="761" y="112" width="1.2" height="456" fill="#a4a4a4"/><rect x="761" y="112" width="16" height="1.2" fill="#b0b0b0"/><rect x="775.5" y="113" width="1.5" height="455" fill="#fbfbfb"/><rect x="762.2" y="113.2" width="1" height="455" fill="#f8f8f8"/><rect x="761.8" y="270" width="13.8" height="298" fill="url(#mg)"/><rect x="779" y="112.5" width="17" height="456" fill="#efefef"/><rect x="779" y="112" width="1.2" height="456" fill="#a4a4a4"/><rect x="779" y="112" width="17" height="1.2" fill="#b0b0b0"/><rect x="794.5" y="113" width="1.5" height="455" fill="#fbfbfb"/><rect x="780.2" y="113.2" width="1" height="455" fill="#f8f8f8"/><rect x="779.8" y="261" width="14.8" height="307" fill="url(#mg)"/></svg>
<div class="abs" style="left:7px;top:3px;width:18px;height:19px;background:linear-gradient(#a9c6ec,#6ea6e8 50%,#8cc4f4 85%,#cfe6fa);"></div><svg class="abs" style="left:7px;top:3px" width="18" height="19"><path d="M2,10 L4,7 L5,12 L7,6 L9,12 L11,7 L13,11 L15,7 L16,10" stroke="#e8f2ff" stroke-width="1.2" fill="none"/></svg><div class="abs" style="left:0;top:7px;width:746px;text-align:center;font-size:11.5px;color:#606060;letter-spacing:0.3px">Leapic Audio Editor -</div><div class="abs" style="left:730px;top:5.5px;width:16px;height:16px;box-sizing:border-box;border-radius:50%;border:2px solid #989898;background:radial-gradient(circle at 50% 40%,#f4f4f4,#e0e0e0 60%,#cfcfcf);box-shadow:0 0 1.5px #aaa"></div><div class="abs" style="left:754px;top:5.5px;width:16px;height:16px;box-sizing:border-box;border-radius:50%;border:2px solid #989898;background:radial-gradient(circle at 50% 40%,#f4f4f4,#e0e0e0 60%,#cfcfcf);box-shadow:0 0 1.5px #aaa"></div><div class="abs" style="left:777px;top:5.5px;width:16px;height:16px;box-sizing:border-box;border-radius:50%;border:2px solid #989898;background:radial-gradient(circle at 50% 40%,#f4f4f4,#e0e0e0 60%,#cfcfcf);box-shadow:0 0 1.5px #aaa"></div><div class="abs" style="left:9px;top:30px;width:1px;height:80px;background:repeating-linear-gradient(#777 0,#777 1px,transparent 1px,transparent 3px)"></div><div class="abs" style="left:23.8px;top:33.5px;font-size:11.5px;color:#1a1a1a;letter-spacing:0.3px">File</div><div class="abs" style="left:59.4px;top:33.5px;font-size:11.5px;color:#1a1a1a;letter-spacing:0.8px">Edit</div><div class="abs" style="left:98.4px;top:33.5px;font-size:11.5px;color:#1a1a1a;letter-spacing:0px">View</div><div class="abs" style="left:140.5px;top:33.5px;font-size:11.5px;color:#1a1a1a;letter-spacing:0.4px">Play</div><div class="abs" style="left:180.2px;top:33.5px;font-size:11.5px;color:#1a1a1a;letter-spacing:0.9px">Effect</div><div class="abs" style="left:231px;top:33.5px;font-size:11.5px;color:#1a1a1a;letter-spacing:0.5px">Filter</div><div class="abs" style="left:278px;top:33.5px;font-size:11.5px;color:#1a1a1a;letter-spacing:0.2px">Tools</div><div class="abs" style="left:322.2px;top:33.5px;font-size:11.5px;color:#1a1a1a;letter-spacing:0.6px">Help</div><svg class="abs" style="left:20px;top:56px" width="16" height="18" viewBox="0 0 16 18"><path d="M2.5,1.5 H10 L13.5,5 V16.5 H2.5 Z" fill="#fff" stroke="#222" stroke-width="1.3"/></svg><svg class="abs" style="left:42px;top:56px" width="22" height="18" viewBox="0 0 22 18"><path d="M1.5,6 H7 L8.5,7.5 H15 V16 H1.5 Z" fill="#c8c040" stroke="#555" stroke-width="1"/><path d="M4,10 H20 L16,16 H1.5 Z" fill="#e4dc60" stroke="#666" stroke-width="1"/><path d="M12,4 Q15,0 18,3" stroke="#555" fill="none" stroke-width="1.2"/></svg><svg class="abs" style="left:69px;top:57px" width="18" height="17" viewBox="0 0 18 17"><rect x="1.5" y="1.5" width="14.5" height="14.5" fill="#7c8848" stroke="#3c4424" stroke-width="1.5"/><rect x="4.5" y="2.2" width="8.5" height="5.5" fill="#d0d0c8"/><rect x="4" y="10.5" width="9.5" height="5" fill="#f2f2f2"/><rect x="10" y="11.5" width="2" height="3" fill="#222"/></svg><svg class="abs" style="left:92px;top:56px" width="20" height="18" viewBox="0 0 20 18"><rect x="2" y="5" width="14" height="12" fill="#f4f4f4" stroke="#444" stroke-width="1.2"/><rect x="4" y="10" width="10" height="1.2" fill="#444"/><rect x="4" y="13" width="10" height="1.2" fill="#444"/><path d="M8,6 L16,2 L18,5" stroke="#555" stroke-width="2" fill="none"/><rect x="17" y="1" width="3" height="5" fill="#3040a0"/></svg><svg class="abs" style="left:119px;top:56px" width="16" height="18" viewBox="0 0 16 18"><path d="M1,5 Q7,0 15,3 L12,6 L9,5 L6,17 L3,17 L4,6 Z" fill="#8a8a8a" stroke="#4a4a4a" stroke-width="0.8"/><path d="M8,8 L10,17 L8.5,17 Z" fill="#3050c0"/><path d="M10,7 L13,17 L11,17 Z" fill="#e04020"/><path d="M11,6 L14.5,15 L13.5,16 Z" fill="#f0a030"/></svg><div class="abs" style="left:143px;top:56px;width:2px;height:22px;background:repeating-linear-gradient(#444 0,#444 1.2px,transparent 1.2px,transparent 3px)"></div><svg class="abs" style="left:149px;top:56px" width="20" height="18" viewBox="0 0 20 18"><rect x="1.5" y="1.5" width="9" height="12" fill="#e8e8e8" stroke="#222" stroke-width="1.6"/><rect x="3" y="5" width="5" height="1.4" fill="#222"/><rect x="3" y="8" width="5" height="1.4" fill="#222"/><rect x="6.5" y="6.5" width="11" height="10" fill="#f4f4f4" stroke="#6a60b0" stroke-width="1.4"/><rect x="8.5" y="10" width="7" height="1.4" fill="#222"/><rect x="8.5" y="13" width="7" height="1.4" fill="#222"/></svg><svg class="abs" style="left:176px;top:56px" width="14" height="18" viewBox="0 0 14 18"><path d="M3.5,1 L8,10.5 M10.5,1 L6,10.5" stroke="#222" stroke-width="1.5"/><ellipse cx="4.5" cy="13.5" rx="2.3" ry="3" fill="none" stroke="#4a50c0" stroke-width="1.4"/><ellipse cx="9.5" cy="13.5" rx="2.3" ry="3" fill="none" stroke="#4a50c0" stroke-width="1.4"/></svg><svg class="abs" style="left:197px;top:56px" width="22" height="18" viewBox="0 0 22 18"><rect x="2" y="3" width="11" height="13" fill="#d0d0d0" stroke="#c0c0c0"/><rect x="8" y="8" width="11" height="9" fill="#e4e4e4" stroke="#c8c8c8"/><rect x="5" y="1" width="5" height="3" fill="#c8c8c8"/></svg><svg class="abs" style="left:224px;top:56px" width="18" height="18" viewBox="0 0 18 18"><path d="M2.5,2.5 L15,15.5 M15,2.5 L2.5,15.5" stroke="#1a1a1a" stroke-width="2.2"/></svg><svg class="abs" style="left:247px;top:56px" width="21" height="18" viewBox="0 0 21 18"><path d="M1,6 Q5,-1 9,6 T18,6" stroke="#d04040" stroke-width="1.2" fill="none"/><rect x="1" y="8" width="19" height="1.2" fill="#c8a020"/><path d="M1,14 Q5,7 9,13 T19,13" stroke="#222" stroke-width="1.3" fill="none"/><rect x="2" y="16" width="18" height="1" fill="#444"/></svg><div class="abs" style="left:273px;top:56px;width:2px;height:22px;background:repeating-linear-gradient(#444 0,#444 1.2px,transparent 1.2px,transparent 3px)"></div><svg class="abs" style="left:281px;top:58px" width="17" height="14" viewBox="0 0 17 14"><path d="M6.5,7.5 Q10.5,2.5 14,5.5 Q16,8.5 13,12" stroke="#3a3aa0" stroke-width="2.2" fill="none"/><path d="M0.5,10.5 L7,4.5 L8.5,11.5 Z" fill="#3a3aa0"/></svg><svg class="abs" style="left:305px;top:58px" width="17" height="14" viewBox="0 0 17 14"><path d="M10.5,7.5 Q6.5,2.5 3,5.5 Q1,8.5 4,12" stroke="#cdcdcd" stroke-width="2.2" fill="none"/><path d="M16.5,10.5 L10,4.5 L8.5,11.5 Z" fill="#cdcdcd"/></svg><div class="abs" style="left:329px;top:56px;width:2px;height:22px;background:repeating-linear-gradient(#444 0,#444 1.2px,transparent 1.2px,transparent 3px)"></div><svg class="abs" style="left:335px;top:56px" width="19" height="19" viewBox="0 0 19 19"><circle cx="7.5" cy="7.5" r="6" fill="#fafafa" stroke="#333" stroke-width="1.6"/><path d="M11.5,11.5 L17.5,17.5" stroke="#2a2a80" stroke-width="2.6"/><path d="M4.5,7.5 H10.5 M7.5,4.5 V10.5" stroke="#2a3aa8" stroke-width="2"/></svg><svg class="abs" style="left:360px;top:56px" width="19" height="19" viewBox="0 0 19 19"><circle cx="7.5" cy="7.5" r="6" fill="#fafafa" stroke="#333" stroke-width="1.6"/><path d="M11.5,11.5 L17.5,17.5" stroke="#2a2a80" stroke-width="2.6"/><path d="M4.5,7.5 H10.5" stroke="#2a3aa8" stroke-width="2"/></svg><svg class="abs" style="left:385px;top:56px" width="19" height="19" viewBox="0 0 19 19"><circle cx="7.5" cy="7.5" r="6" fill="#fafafa" stroke="#333" stroke-width="1.6"/><path d="M11.5,11.5 L17.5,17.5" stroke="#2a2a80" stroke-width="2.6"/><path d="M13,0 L17,4 M17,0 L13,4" stroke="#2a3aa8" stroke-width="1.6"/></svg><svg class="abs" style="left:410px;top:56px" width="19" height="19" viewBox="0 0 19 19"><circle cx="7.5" cy="7.5" r="6" fill="#fafafa" stroke="#333" stroke-width="1.6"/><path d="M11.5,11.5 L17.5,17.5" stroke="#2a2a80" stroke-width="2.6"/><text x="7.5" y="10" font-size="6" text-anchor="middle" fill="#2a3aa8" font-family="Liberation Sans" font-weight="bold">1:1</text></svg><div class="abs" style="left:434px;top:56px;width:2px;height:22px;background:repeating-linear-gradient(#444 0,#444 1.2px,transparent 1.2px,transparent 3px)"></div><svg class="abs" style="left:445px;top:56px" width="14" height="18" viewBox="0 0 14 18"><path d="M2.5,5 L12.5,9 L2.5,13 Z" fill="#303030"/></svg><svg class="abs" style="left:466px;top:56px" width="17" height="18" viewBox="0 0 17 18"><circle cx="7.5" cy="9.5" r="6.3" fill="none" stroke="#303030" stroke-width="1.5"/><path d="M5.5,6 L11.5,9.5 L5.5,13 Z" fill="#303030"/></svg><svg class="abs" style="left:489px;top:56px" width="21" height="18" viewBox="0 0 21 18"><path d="M10.5,9.5 C7.5,6 3,6.5 3,9.5 C3,12.5 7.5,13 10.5,9.5 C13.5,6 18,6.5 18,9.5 C18,12.5 13.5,13 10.5,9.5 Z" fill="none" stroke="#303030" stroke-width="2.2"/></svg><div class="abs" style="left:512px;top:53px;width:24px;height:25px;box-sizing:border-box;border:1px solid #888;border-radius:2px;background:linear-gradient(#c4c4c4,#d8d8d8)"></div><div class="abs" style="left:519.5px;top:61.5px;width:12px;height:12px;border-radius:50%;background:#f00"></div><svg class="abs" style="left:544px;top:56px" width="11" height="18" viewBox="0 0 11 18"><rect x="1" y="5.5" width="3" height="9" fill="#333"/><rect x="6.5" y="5.5" width="3" height="9" fill="#333"/></svg><svg class="abs" style="left:569px;top:56px" width="13" height="18" viewBox="0 0 13 18"><rect x="1" y="5.5" width="2.6" height="9" fill="#333"/><path d="M5,5.5 L11.5,10 L5,14.5 Z" fill="#333"/></svg><svg class="abs" style="left:593px;top:56px" width="12" height="18" viewBox="0 0 12 18"><rect x="1.2" y="5.8" width="9" height="8.7" fill="#333"/></svg><div class="abs" style="left:614px;top:56px;width:2px;height:22px;background:repeating-linear-gradient(#444 0,#444 1.2px,transparent 1.2px,transparent 3px)"></div><svg class="abs" style="left:619px;top:55px" width="24" height="20" viewBox="0 0 24 20"><path d="M2,9 L12,2 L22,8 L13,17 Z" fill="#c060c0" stroke="#603070" stroke-width="1"/><path d="M2,9 L2,12 L13,19 L22,10 L22,8 L13,17 Z" fill="#e0c0e0" stroke="#603070" stroke-width="0.8"/><path d="M9,6 L15,9 L13,11" stroke="#f0e040" stroke-width="1.6" fill="none"/></svg><svg class="abs" style="left:19px;top:85px" width="19" height="19" viewBox="0 0 19 19"><path d="M4,5 L15,14 M15,5 L4,14" stroke="#222" stroke-width="1.8" fill="none"/><path d="M1,2.5 L7,3.5 L3,8 Z" fill="#333"/><path d="M18,2.5 L12,3.5 L16,8 Z" fill="#3a48b8"/><path d="M1,16.5 L7,15.5 L3,11 Z" fill="#333"/><path d="M18,16.5 L12,15.5 L16,11 Z" fill="#3a48b8"/></svg><svg class="abs" style="left:43px;top:85px" width="20" height="20" viewBox="0 0 20 20"><path d="M6,7 Q14,4 16.5,11 L18,18" stroke="#3a50e8" stroke-width="5" fill="none"/><path d="M0.5,6 L8.5,0.5 L8.5,13 Z" fill="#3a50e8"/></svg><svg class="abs" style="left:67px;top:85px" width="21" height="19" viewBox="0 0 21 19"><rect x="1" y="9" width="19" height="1.4" fill="#222"/><rect x="9.5" y="1" width="1.6" height="17" fill="#222"/><rect x="6" y="6" width="8" height="1" fill="#222"/><rect x="6" y="12" width="8" height="1" fill="#222"/></svg><div class="abs" style="left:92px;top:86px;width:2px;height:22px;background:repeating-linear-gradient(#444 0,#444 1.2px,transparent 1.2px,transparent 3px)"></div><svg class="abs" style="left:99px;top:85px" width="20" height="19" viewBox="0 0 20 19"><path d="M1,13 L2.5,7 L3.5,15 L5,5 L6.5,14 L8,3 L9.5,12 L10.5,6 L12,16 L13.5,4 L15,13 L16.5,6 L18,14 L19,9" stroke="#2a2a2a" stroke-width="1" fill="none"/></svg><svg class="abs" style="left:123px;top:85px" width="22" height="19" viewBox="0 0 22 19"><rect x="1" y="2" width="20" height="1.4" fill="#c03030"/><rect x="1" y="15" width="20" height="1.4" fill="#c03030"/><path d="M2,13 L4,7 L5,13 L7,5 L9,13 L11,6 L12,13 L14,5 L16,13 L18,7 L20,13" stroke="#2a3aa8" stroke-width="1.1" fill="none"/></svg><svg class="abs" style="left:147px;top:85px" width="21" height="19" viewBox="0 0 21 19"><path d="M1,9.5 L19,2 L19,17 Z" fill="#e03030"/><path d="M5,9.5 L7,6 L8,13 L10,4 L11,15 L13,3 L14,16 L16,2 L17,17" stroke="#a01010" stroke-width="0.9" fill="none"/><rect x="18" y="1" width="1.5" height="17" fill="#333"/></svg><svg class="abs" style="left:172px;top:85px" width="21" height="19" viewBox="0 0 21 19"><path d="M20,9.5 L2,2 L2,17 Z" fill="#3040d0"/><path d="M16,9.5 L14,6 L13,13 L11,4 L10,15 L8,3 L7,16 L5,2 L4,17" stroke="#101890" stroke-width="0.9" fill="none"/><rect x="1" y="1" width="1.5" height="17" fill="#333"/></svg><svg class="abs" style="left:201px;top:85px" width="13" height="19" viewBox="0 0 13 19"><path d="M6.5,1 L11,5 L6.5,9 L2,5 Z" fill="#4a90e0"/><path d="M6.5,10 L11,14 L6.5,18 L2,14 Z" fill="#4a90e0"/></svg><svg class="abs" style="left:224px;top:85px" width="18" height="19" viewBox="0 0 18 19"><path d="M12,1 L17,5 L12,9 L8,5 Z" fill="#4a90e0"/><path d="M6,7 L11,11 L6,15 L2,11 Z" fill="#4a90e0"/></svg><svg class="abs" style="left:249px;top:85px" width="15" height="19" viewBox="0 0 15 19"><path d="M6,2 Q1,9.5 6,17 M9,4 Q5,9.5 9,15 M12,6 Q9.5,9.5 12,13" stroke="#3a48c8" stroke-width="1.3" fill="none"/></svg><div class="abs" style="left:272px;top:86px;width:2px;height:22px;background:repeating-linear-gradient(#444 0,#444 1.2px,transparent 1.2px,transparent 3px)"></div><svg class="abs" style="left:279px;top:85px" width="20" height="19" viewBox="0 0 20 19"><path d="M2,10 L8,5 L9,14 Z" fill="#556030"/><path d="M10,4 Q14,2 13,7 M11,9 Q16,8 14,13 M10,14 Q14,15 13,18" stroke="#333" stroke-width="1" fill="none"/><rect x="15" y="6" width="3" height="7" fill="#707040"/></svg><svg class="abs" style="left:305px;top:87px" width="17" height="16" viewBox="0 0 17 16"><rect x="1" y="1" width="15" height="14.5" fill="#f8f8f8" stroke="#6a8ad0" stroke-width="1.1"/><path d="M4.5,6 H9 M7,11 H13" stroke="#222" stroke-width="1.1"/><path d="M3,6 L5.5,4.3 V7.7 Z M14,11 L11.5,9.3 V12.7 Z" fill="#222"/></svg><svg class="abs" style="left:329px;top:87px" width="18" height="16" viewBox="0 0 18 16"><rect x="1" y="1" width="16" height="14.5" fill="#f8f8f8" stroke="#6a8ad0" stroke-width="1.1"/><path d="M4,11 L5.5,5 L7,11 L8.5,5 L10,11 L11.5,5 L13,11 L14.5,5" stroke="#222" stroke-width="1.1" fill="none"/><path d="M4,8 H14.5" stroke="#222" stroke-width="0.8"/></svg><svg class="abs" style="left:353px;top:85px" width="19" height="19" viewBox="0 0 19 19"><path d="M2,7 Q2,5 5,5 L8,9 Q11,12 13,9 L13,4 H18 V15 Q18,17 15,17 H12 Q9,17 7,13 L6,11 V17 H2 Z" fill="#2a30a0"/><path d="M14,1 V5 M16,1 V5 M3,13 V17 M5,13 V17" stroke="#222" stroke-width="1"/></svg><svg class="abs" style="left:378px;top:85px" width="19" height="19" viewBox="0 0 19 19"><path d="M1.5,9 H17.5 V14 Q17.5,16 15.5,16 H3.5 Q1.5,16 1.5,14 Z" fill="#a8c4ec" stroke="#6a8ad0" stroke-width="0.8"/><circle cx="4" cy="8" r="1.8" fill="#8aa860"/><circle cx="9.5" cy="8" r="1.8" fill="#8aa860"/><circle cx="15" cy="8" r="1.8" fill="#8aa860"/><path d="M3,11 V15 M5,11 V15 M7,11 V15 M9,11 V15 M11,11 V15 M13,11 V15 M15,11 V15" stroke="#4a6ab0" stroke-width="0.7"/></svg><svg class="abs" style="left:402px;top:85px" width="20" height="19" viewBox="0 0 20 19"><rect x="3" y="9" width="14" height="1.6" fill="#222"/><rect x="8" y="1" width="1.8" height="17" fill="#222"/><rect x="11" y="1" width="1.8" height="17" fill="#222"/><path d="M0.5,9.8 L5,6.5 L5,13 Z M19.5,9.8 L15,6.5 L15,13 Z" fill="#222"/></svg><svg class="abs" style="left:429px;top:85px" width="16" height="19" viewBox="0 0 16 19"><rect x="2" y="2" width="3" height="15" rx="1.5" fill="#88a8a0" stroke="#5a7aa0" stroke-width="0.8"/><circle cx="11.5" cy="5.5" r="3.3" fill="#d8b048" stroke="#b08a30" stroke-width="0.6"/><circle cx="11.5" cy="13.5" r="3.3" fill="#d8b048" stroke="#b08a30" stroke-width="0.6"/></svg><div class="abs" style="left:453px;top:86px;width:2px;height:22px;background:repeating-linear-gradient(#444 0,#444 1.2px,transparent 1.2px,transparent 3px)"></div><div class="abs" style="left:460px;top:86px;font-size:17px;color:#404040;transform:scaleX(0.52);transform-origin:0 0;letter-spacing:0px">BPF</div><div class="abs" style="left:485px;top:86px;font-size:17px;color:#404040;transform:scaleX(0.52);transform-origin:0 0;letter-spacing:0px">HPF</div><div class="abs" style="left:509px;top:86px;font-size:17px;color:#404040;transform:scaleX(0.52);transform-origin:0 0;letter-spacing:0px">LPF</div><div class="abs" style="left:534px;top:86px;font-size:17px;color:#404040;transform:scaleX(0.52);transform-origin:0 0;letter-spacing:0px">HSF</div><div class="abs" style="left:559px;top:86px;font-size:17px;color:#404040;transform:scaleX(0.52);transform-origin:0 0;letter-spacing:0px">LSF</div><svg class="abs" style="left:584px;top:85px" width="17" height="19" viewBox="0 0 17 19"><path d="M2,6 H9 M2,10 H9 M2,14 H9 M2,17 H14" stroke="#4050c0" stroke-width="1.2" stroke-dasharray="1.5 1"/><path d="M8,12 L15,3 L16,5 L10,13 Z" fill="#e0d020"/></svg><div class="abs" style="left:609px;top:87px;font-size:11px;color:#3a48c0;font-weight:bold;letter-spacing:-0.3px">EQ</div><svg class="abs" style="left:608px;top:98px" width="16" height="6" viewBox="0 0 16 6"><path d="M1.5,4.5 L3,1.5 L4.5,4.5 L6,1.5 L7.5,4.5 L9,1.5 L10.5,4.5 L12,1.5 L13.5,4.5" stroke="#333" stroke-width="0.8" fill="none"/></svg><div class="abs" style="left:633px;top:86px;font-size:17px;color:#404040;transform:scaleX(0.52);transform-origin:0 0">FFT</div><div class="abs" style="left:656px;top:86px;width:2px;height:22px;background:repeating-linear-gradient(#444 0,#444 1.2px,transparent 1.2px,transparent 3px)"></div><svg class="abs" style="left:663px;top:85px" width="19" height="19" viewBox="0 0 19 19"><path d="M2,8 H11 M2,12 H9 M1,16 H18" stroke="#2a3aa8" stroke-width="1.3"/><path d="M9,14 L16,3 L18,4 L11,15 Z" fill="#70c030" stroke="#3a6020" stroke-width="0.6"/><rect x="15" y="1" width="3" height="3" fill="#d03030"/></svg><svg class="abs" style="left:688px;top:85px" width="19" height="19" viewBox="0 0 19 19"><path d="M7,5 L11,2 L15,5 L11,8 Z" fill="#4a90e0"/><path d="M2,12 H18 M1,16 H17" stroke="#6070d0" stroke-width="1.2" stroke-dasharray="1.5 1.5"/></svg><svg class="abs" style="left:712px;top:85px" width="19" height="19" viewBox="0 0 19 19"><rect x="2" y="6" width="10" height="9" fill="none" stroke="#6070d0" stroke-width="1" stroke-dasharray="1.5 1"/><path d="M1,16 H17" stroke="#222" stroke-width="1.2"/><path d="M9,14 L16,3 L18,4 L11,15 Z" fill="#70c030" stroke="#3a6020" stroke-width="0.6"/><rect x="15" y="1" width="3" height="3" fill="#d03030"/></svg>
<div class="abs" style="left:391px;top:177px;width:325px;height:256px;box-sizing:border-box;background:#ededed;border:1px solid #b8b8b8;border-top-left-radius:5px;border-top-right-radius:5px;box-shadow:0 0 1px #ccc"></div><div class="abs" style="left:392px;top:178px;width:323px;height:24px;box-sizing:border-box;background:repeating-linear-gradient(#f0f0f0 0,#f0f0f0 2px,#ececec 2px,#ececec 4px);border-bottom:1px solid #c8c8c8;border-top-left-radius:4px;border-top-right-radius:4px"></div><div class="abs" style="left:397px;top:180px;width:18px;height:17px;background:linear-gradient(#a9c6ec,#6ea6e8 50%,#8cc4f4 85%,#cfe6fa)"></div><svg class="abs" style="left:397px;top:180px" width="18" height="17"><path d="M2,9 L4,6 L5,11 L7,5 L9,11 L11,6 L13,10 L15,6 L16,9" stroke="#e8f2ff" stroke-width="1.1" fill="none"/></svg><div class="abs" style="left:388px;top:183px;width:325px;text-align:center;font-size:12px;color:#626262">Audio Recorder</div><div class="abs" style="left:691px;top:182px;width:16px;height:16px;box-sizing:border-box;border-radius:50%;border:2px solid #989898;background:radial-gradient(circle at 50% 40%,#f4f4f4,#e0e0e0 60%,#cfcfcf);box-shadow:0 0 1.5px #aaa"></div><div class="abs" style="left:409px;top:224px;font-size:14px;color:#222">Source:</div><div class="abs" style="left:412px;top:261.5px;font-size:14px;color:#222">Device:</div><div class="abs" style="left:464px;top:221px;width:212px;height:23px;box-sizing:border-box;background:#fff;border:1px solid #8a8a8a;border-radius:3px;box-shadow:inset 0 1px 1px #ccc"></div><div class="abs" style="left:467px;top:225.5px;font-size:14px;color:#1a1a1a;letter-spacing:-0.22px">Creative Sound Blaster PCI</div><div class="abs" style="left:659px;top:221px;width:17px;height:23px;box-sizing:border-box;border:1px solid #5a7ab0;border-radius:0 3px 3px 0;background:linear-gradient(#cfe2fa,#7eb0ec 50%,#5e98e0 51%,#b6d8fa)"></div><svg class="abs" style="left:663px;top:226px" width="9" height="13"><path d="M4.5,0.5 L8,5 H1 Z M4.5,12.5 L8,8 H1 Z" fill="#111"/></svg><div class="abs" style="left:464px;top:257px;width:212px;height:23px;box-sizing:border-box;background:#fff;border:1px solid #8a8a8a;border-radius:3px;box-shadow:inset 0 1px 1px #ccc"></div><div class="abs" style="left:467px;top:261.5px;font-size:14px;color:#1a1a1a;letter-spacing:0">Stereo Mix</div><div class="abs" style="left:659px;top:257px;width:17px;height:23px;box-sizing:border-box;border:1px solid #5a7ab0;border-radius:0 3px 3px 0;background:linear-gradient(#cfe2fa,#7eb0ec 50%,#5e98e0 51%,#b6d8fa)"></div><svg class="abs" style="left:663px;top:262px" width="9" height="13"><path d="M4.5,0.5 L8,5 H1 Z M4.5,12.5 L8,8 H1 Z" fill="#111"/></svg><div class="abs" style="left:404.5px;top:302px;width:298px;height:72px;box-sizing:border-box;border:1.5px solid #bdbdbd;border-radius:6px;box-shadow:inset 1px 1px 0 #fafafa, 1px 1px 0 #fafafa"></div><div class="abs" style="left:411px;top:294px;padding:0 3px;background:#ededed;font-size:14px;color:#1a1a1a">Record Method</div><div class="abs" style="left:411px;top:318px;width:14px;height:14px;box-sizing:border-box;border-radius:50%;border:1px solid #7a7a7a;background:radial-gradient(circle at 50% 30%,#ffffff,#e0e0e0 60%,#c4c4c4)"></div><div class="abs" style="left:428px;top:318px;font-size:14px;color:#262626">Mix old and new data</div><div class="abs" style="left:411px;top:346px;width:14px;height:14px;box-sizing:border-box;border-radius:50%;border:1px solid #4a6a9a;background:radial-gradient(circle at 50% 50%,#0a0a20 0,#0a0a20 1.8px,#a8d8ff 2.6px,#4a8ae0 4.5px,#2a5ab8 6px,#9cc0f0 7px)"></div><div class="abs" style="left:428px;top:346px;font-size:14px;color:#262626">Clear old data before recording new data</div><div class="abs" style="left:455px;top:389px;width:90px;height:28px;box-sizing:border-box;border:1px solid #6a6a6a;border-radius:9px;background:linear-gradient(#fdfdfd,#e6e6e6 50%,#dcdcdc 51%,#f0f0f0);text-align:center;font-size:14px;line-height:26px;color:#111">Record</div><div class="abs" style="left:561px;top:389px;width:90px;height:28px;box-sizing:border-box;border:1px solid #b4b4b4;border-radius:9px;background:linear-gradient(#fdfdfd,#e6e6e6 50%,#dcdcdc 51%,#f0f0f0);text-align:center;font-size:14px;line-height:26px;color:#8a8a8a">Stop</div>
</body></html>
